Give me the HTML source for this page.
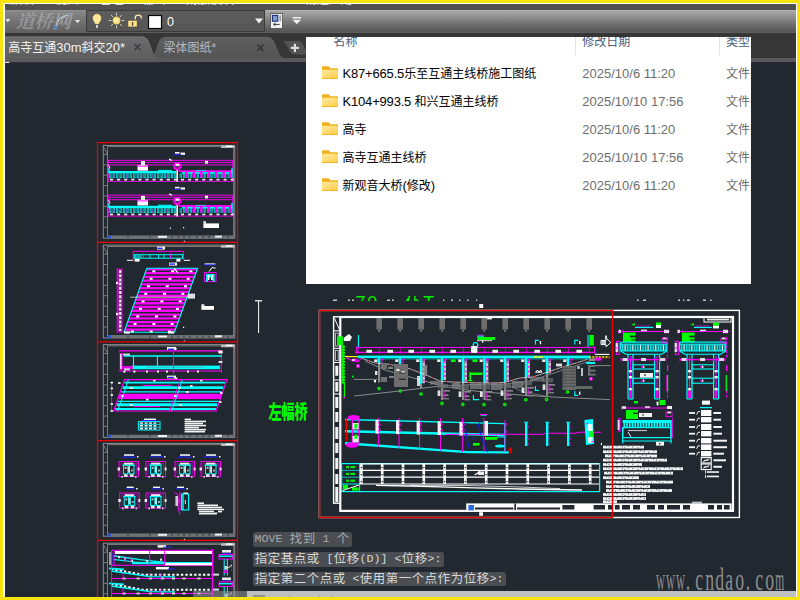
<!DOCTYPE html><html lang="zh"><head><meta charset="utf-8"><title>CAD</title><style>
html,body{margin:0;padding:0}
body{width:800px;height:600px;position:relative;overflow:hidden;background:#f8e40c;font-family:"Liberation Sans","Noto Sans CJK SC",sans-serif}
.abs{position:absolute}
#wl{left:3px;top:3px;width:794px;height:593.6px;background:#fff}
#app{left:5px;top:4px;width:790.8px;height:592.6px;background:#212830;overflow:hidden}
#menu{left:0;top:0;width:791px;height:6.2px;background:#515151;overflow:hidden}
#menu span{position:absolute;top:-10.7px;font-size:12px;line-height:14px;color:#e8e8e8;white-space:nowrap}
#tb{left:0;top:6px;width:791px;height:22.7px;background:linear-gradient(#b6b6b6 0,#b2b2b2 4%,#a3a3a3 6%,#9a9a9a 20%,#7a7a7a 50%,#626262 78%,#555 94%,#5e5e5e 97%,#5e5e5e 100%)}
#tbl{left:0;top:6px;width:80.5px;height:22.7px;background:linear-gradient(#939393 0,#868686 8%,#727272 50%,#5f5f5f 100%)}
#combo{left:80.5px;top:6.4px;width:177px;height:19.6px;border:1px solid #3b3b3b;background:linear-gradient(#5d5d5d,#555)}
#tabbar{left:0;top:28.7px;width:791px;height:25.5px;background:#363636}
#tabstrip{left:0;top:54.2px;width:791px;height:4px;background:#5a5a5a}
.tabtxt{font-size:12px;line-height:14px;white-space:nowrap}
#win{left:300.7px;top:33px;width:445.5px;height:247.2px;background:#fff;overflow:hidden}
#win .h{position:absolute;top:-2.6px;font-size:12px;line-height:16px;color:#4c607a;white-space:nowrap}
#win .n{position:absolute;left:36.8px;font-size:12px;line-height:16px;color:#000;white-space:nowrap}
#win .d{position:absolute;left:276.6px;font-size:12px;line-height:16px;color:#6d6d6d;white-space:nowrap}
#win .t{position:absolute;left:420.4px;font-size:12px;line-height:16px;color:#6d6d6d;white-space:nowrap}
#win .l{font-size:13px;letter-spacing:-.18px}
#win .d .l{letter-spacing:0}
#win .sep{position:absolute;top:0;width:1px;height:18px;background:#e2e2e2}
.cmd{height:14.2px;border-radius:2.5px;background:#4a4e52;white-space:nowrap;font-family:"Liberation Mono","Noto Sans CJK SC",monospace;color:#e2e2e2;overflow:hidden}
.cmd i{font-style:normal;display:inline-block;width:7px;font-size:11.6px;line-height:14.2px;text-align:center;vertical-align:top}
.cmd b{font-weight:normal;display:inline-block;width:13px;font-size:12.4px;line-height:14.2px;text-align:center;vertical-align:top;font-family:"Liberation Sans","Noto Sans CJK SC",sans-serif}
.gt{height:4.6px;overflow:hidden;color:#00ee00;font-size:18px;line-height:18px;white-space:nowrap}
.gt span{position:relative;top:-2.4px;display:block;letter-spacing:1.6px}
.gt em{font-style:normal;margin-left:-1px}
#botbar{left:242px;top:586.5px;width:549px;height:6px;background:#bec0c2}
#botbar2{left:188px;top:586.5px;width:54px;height:6px;background:rgba(150,152,155,.55)}
#wm{left:648.2px;top:559px;white-space:nowrap;color:#8d8d8d;font-family:"Liberation Serif",serif}
#wm i{font-style:normal;display:inline-block;width:9.95px;text-align:center;font-size:31px;line-height:34px;transform:scaleX(.62);transform-origin:50% 50%}
#zfq{left:263.6px;top:399px;font-size:13px;line-height:13px;color:#00ff00;white-space:nowrap;font-weight:900;transform:scaleY(1.46);transform-origin:0 0;font-family:"Liberation Sans","Noto Sans CJK SC",sans-serif}
</style></head><body>
<div id="wl" class="abs"></div>
<div id="app" class="abs">
<svg class="abs" style="left:-5px;top:-4px" width="800" height="600" viewBox="0 0 800 600"><g fill="none" shape-rendering="auto"><rect x="103.3" y="145.4" width="131.5" height="92.8" fill="none" stroke="#8e8e8e" stroke-width="1"/><rect x="107.6" y="146.7" width="126.1" height="89.3" fill="none" stroke="#8e8e8e" stroke-width="0.8"/><path d="M103.3 146.7L107.6 154.4" stroke="#8e8e8e" stroke-width="0.8"/><path d="M103.3 154.4L107.6 154.4" stroke="#8e8e8e" stroke-width="0.8"/><path d="M103.3 164.8L107.6 164.8" stroke="#8e8e8e" stroke-width="0.8"/><path d="M103.3 175.2L107.6 175.2" stroke="#8e8e8e" stroke-width="0.8"/><path d="M103.3 185.6L107.6 185.6" stroke="#8e8e8e" stroke-width="0.8"/><path d="M103.3 196L107.6 196" stroke="#8e8e8e" stroke-width="0.8"/><path d="M103.3 206.4L107.6 206.4" stroke="#8e8e8e" stroke-width="0.8"/><path d="M103.3 216.8L107.6 216.8" stroke="#8e8e8e" stroke-width="0.8"/><path d="M103.3 227.2L107.6 227.2" stroke="#8e8e8e" stroke-width="0.8"/><rect x="107.6" y="236" width="126.1" height="2.2" fill="#6f7378"/><path d="M128 236L128 238.2" stroke="#212830" stroke-width="0.8"/><path d="M150 236L150 238.2" stroke="#212830" stroke-width="0.8"/><path d="M172 236L172 238.2" stroke="#212830" stroke-width="0.8"/><path d="M178 236L178 238.2" stroke="#212830" stroke-width="0.8"/><path d="M184 236L184 238.2" stroke="#212830" stroke-width="0.8"/><path d="M190 236L190 238.2" stroke="#212830" stroke-width="0.8"/><path d="M197 236L197 238.2" stroke="#212830" stroke-width="0.8"/><path d="M203 236L203 238.2" stroke="#212830" stroke-width="0.8"/><path d="M209 236L209 238.2" stroke="#212830" stroke-width="0.8"/><path d="M222 236L222 238.2" stroke="#212830" stroke-width="0.8"/><path d="M228 236L228 238.2" stroke="#212830" stroke-width="0.8"/><rect x="158" y="235.8" width="9" height="2" fill="#ffffff" opacity="0.9"/><rect x="215" y="235.6" width="7" height="2" fill="#ffffff" opacity="0.9"/><rect x="108.2" y="235.6" width="2.8" height="2.8" fill="#2a52d8"/><rect x="221" y="145.4" width="13.8" height="2.6" fill="#b9b9b9"/><rect x="226" y="145.6" width="6.5" height="1.4" fill="#ffffff"/><rect x="183.8" y="240.8" width="1.2" height="1.2" fill="#ffffff"/><rect x="175" y="152" width="4.6" height="1.6" fill="#ffffff"/><rect x="180.6" y="152.6" width="4.4" height="2.2" fill="#ffffff"/><path d="M174 154.7L181 154.7" stroke="#2222ff" stroke-width="1"/><rect x="108.2" y="160.3" width="124.6" height="21" fill="none" stroke="#ff00ff" stroke-width="0.9"/><path d="M108.2 162.4L232.8 162.4" stroke="#ff00ff" stroke-width="0.9"/><path d="M108.2 164.9L232.8 164.9" stroke="#ff00ff" stroke-width="0.9"/><rect x="205" y="160.9" width="3" height="2.8" fill="#ffffff"/><path d="M169 159.1L172 160.5" fill="none" stroke="#ffffff" stroke-width="1.2"/><rect x="141" y="161.1" width="4" height="4.2" fill="#ffffff"/><rect x="137.5" y="165.1" width="10.5" height="5.6" fill="#ffffff"/><path d="M137 166.1L148.4 166.1" stroke="#ff00ff" stroke-width="1"/><rect x="108.6" y="171" width="67.4" height="2.3" fill="#00ffff"/><rect x="158" y="169.9" width="14" height="1.2" fill="#00ffff" opacity="0.9"/><rect x="178.6" y="170.3" width="53.8" height="1.8" fill="#ff00ff"/><rect x="182" y="172.1" width="50.4" height="1.6" fill="#00ffff"/><rect x="196" y="170.1" width="10" height="0.8" fill="#00ffff"/><rect x="109.2" y="173.3" width="2.3" height="4.9" fill="#00ffff" opacity="0.82"/><rect x="109.95" y="173.9" width="0.8" height="3.2" fill="#212830" opacity="0.55"/><rect x="112.62" y="173.3" width="2.3" height="4.9" fill="#00ffff" opacity="0.82"/><rect x="113.37" y="173.9" width="0.8" height="3.2" fill="#212830" opacity="0.55"/><rect x="116.04" y="173.3" width="2.3" height="4.9" fill="#00ffff" opacity="0.82"/><rect x="116.79" y="173.9" width="0.8" height="3.2" fill="#212830" opacity="0.55"/><rect x="119.46" y="173.3" width="2.3" height="4.9" fill="#00ffff" opacity="0.82"/><rect x="120.21" y="173.9" width="0.8" height="3.2" fill="#212830" opacity="0.55"/><rect x="122.88" y="173.3" width="2.3" height="4.9" fill="#00ffff" opacity="0.82"/><rect x="123.63" y="173.9" width="0.8" height="3.2" fill="#212830" opacity="0.55"/><rect x="126.3" y="173.3" width="2.3" height="4.9" fill="#00ffff" opacity="0.82"/><rect x="127.05" y="173.9" width="0.8" height="3.2" fill="#212830" opacity="0.55"/><rect x="129.72" y="173.3" width="2.3" height="4.9" fill="#00ffff" opacity="0.82"/><rect x="130.47" y="173.9" width="0.8" height="3.2" fill="#212830" opacity="0.55"/><rect x="133.14" y="173.3" width="2.3" height="4.9" fill="#00ffff" opacity="0.82"/><rect x="133.89" y="173.9" width="0.8" height="3.2" fill="#212830" opacity="0.55"/><rect x="136.56" y="173.3" width="2.3" height="4.9" fill="#00ffff" opacity="0.82"/><rect x="137.31" y="173.9" width="0.8" height="3.2" fill="#212830" opacity="0.55"/><rect x="139.98" y="173.3" width="2.3" height="4.9" fill="#00ffff" opacity="0.82"/><rect x="140.73" y="173.9" width="0.8" height="3.2" fill="#212830" opacity="0.55"/><rect x="143.4" y="173.3" width="2.3" height="4.9" fill="#00ffff" opacity="0.82"/><rect x="144.15" y="173.9" width="0.8" height="3.2" fill="#212830" opacity="0.55"/><rect x="146.82" y="173.3" width="2.3" height="4.9" fill="#00ffff" opacity="0.82"/><rect x="147.57" y="173.9" width="0.8" height="3.2" fill="#212830" opacity="0.55"/><rect x="150.24" y="173.3" width="2.3" height="4.9" fill="#00ffff" opacity="0.82"/><rect x="150.99" y="173.9" width="0.8" height="3.2" fill="#212830" opacity="0.55"/><rect x="153.66" y="173.3" width="2.3" height="4.9" fill="#00ffff" opacity="0.82"/><rect x="154.41" y="173.9" width="0.8" height="3.2" fill="#212830" opacity="0.55"/><rect x="157.08" y="173.3" width="2.3" height="4.9" fill="#00ffff" opacity="0.82"/><rect x="157.83" y="173.9" width="0.8" height="3.2" fill="#212830" opacity="0.55"/><rect x="160.5" y="173.3" width="2.3" height="4.9" fill="#00ffff" opacity="0.82"/><rect x="161.25" y="173.9" width="0.8" height="3.2" fill="#212830" opacity="0.55"/><rect x="163.92" y="173.3" width="2.3" height="4.9" fill="#00ffff" opacity="0.82"/><rect x="164.67" y="173.9" width="0.8" height="3.2" fill="#212830" opacity="0.55"/><rect x="167.34" y="173.3" width="2.3" height="4.9" fill="#00ffff" opacity="0.82"/><rect x="168.09" y="173.9" width="0.8" height="3.2" fill="#212830" opacity="0.55"/><rect x="170.76" y="173.3" width="2.3" height="4.9" fill="#00ffff" opacity="0.82"/><rect x="171.51" y="173.9" width="0.8" height="3.2" fill="#212830" opacity="0.55"/><rect x="174.18" y="173.3" width="2.3" height="4.9" fill="#00ffff" opacity="0.82"/><rect x="174.93" y="173.9" width="0.8" height="3.2" fill="#212830" opacity="0.55"/><rect x="179.6" y="173.5" width="2.3" height="4.4" fill="#00ffff" opacity="0.8"/><rect x="180.35" y="174.3" width="0.8" height="3" fill="#212830" opacity="0.55"/><rect x="183.02" y="173.5" width="2.3" height="4.4" fill="#00ffff" opacity="0.8"/><rect x="183.77" y="174.3" width="0.8" height="3" fill="#212830" opacity="0.55"/><rect x="186.44" y="173.5" width="2.3" height="4.4" fill="#00ffff" opacity="0.8"/><rect x="187.19" y="174.3" width="0.8" height="3" fill="#212830" opacity="0.55"/><rect x="189.86" y="173.5" width="2.3" height="4.4" fill="#00ffff" opacity="0.8"/><rect x="190.61" y="174.3" width="0.8" height="3" fill="#212830" opacity="0.55"/><rect x="193.28" y="173.5" width="2.3" height="4.4" fill="#00ffff" opacity="0.8"/><rect x="194.03" y="174.3" width="0.8" height="3" fill="#212830" opacity="0.55"/><rect x="196.7" y="173.5" width="2.3" height="4.4" fill="#00ffff" opacity="0.8"/><rect x="197.45" y="174.3" width="0.8" height="3" fill="#212830" opacity="0.55"/><rect x="200.12" y="173.5" width="2.3" height="4.4" fill="#00ffff" opacity="0.8"/><rect x="200.87" y="174.3" width="0.8" height="3" fill="#212830" opacity="0.55"/><rect x="203.54" y="173.5" width="2.3" height="4.4" fill="#00ffff" opacity="0.8"/><rect x="204.29" y="174.3" width="0.8" height="3" fill="#212830" opacity="0.55"/><rect x="206.96" y="173.5" width="2.3" height="4.4" fill="#00ffff" opacity="0.8"/><rect x="207.71" y="174.3" width="0.8" height="3" fill="#212830" opacity="0.55"/><rect x="210.38" y="173.5" width="2.3" height="4.4" fill="#00ffff" opacity="0.8"/><rect x="211.13" y="174.3" width="0.8" height="3" fill="#212830" opacity="0.55"/><rect x="213.8" y="173.5" width="2.3" height="4.4" fill="#00ffff" opacity="0.8"/><rect x="214.55" y="174.3" width="0.8" height="3" fill="#212830" opacity="0.55"/><rect x="217.22" y="173.5" width="2.3" height="4.4" fill="#00ffff" opacity="0.8"/><rect x="217.97" y="174.3" width="0.8" height="3" fill="#212830" opacity="0.55"/><rect x="220.64" y="173.5" width="2.3" height="4.4" fill="#00ffff" opacity="0.8"/><rect x="221.39" y="174.3" width="0.8" height="3" fill="#212830" opacity="0.55"/><rect x="224.06" y="173.5" width="2.3" height="4.4" fill="#00ffff" opacity="0.8"/><rect x="224.81" y="174.3" width="0.8" height="3" fill="#212830" opacity="0.55"/><rect x="227.48" y="173.5" width="2.3" height="4.4" fill="#00ffff" opacity="0.8"/><rect x="228.23" y="174.3" width="0.8" height="3" fill="#212830" opacity="0.55"/><rect x="230.9" y="173.5" width="2.3" height="4.4" fill="#00ffff" opacity="0.8"/><rect x="231.65" y="174.3" width="0.8" height="3" fill="#212830" opacity="0.55"/><rect x="185" y="170.7" width="2.5" height="7" fill="#ff00ff"/><rect x="192.5" y="170.7" width="2.5" height="7" fill="#ff00ff"/><rect x="200" y="170.7" width="2.5" height="7" fill="#ff00ff"/><rect x="207.5" y="170.7" width="2.5" height="7" fill="#ff00ff"/><rect x="215" y="170.7" width="2.5" height="7" fill="#ff00ff"/><rect x="222.5" y="170.7" width="2.5" height="7" fill="#ff00ff"/><rect x="229" y="170.7" width="2.5" height="7" fill="#ff00ff"/><path d="M114 174.3L114 178.3" stroke="#ff00ff" stroke-width="0.8" stroke-opacity="0.8"/><path d="M127 174.3L127 178.3" stroke="#ff00ff" stroke-width="0.8" stroke-opacity="0.8"/><path d="M140 174.3L140 178.3" stroke="#ff00ff" stroke-width="0.8" stroke-opacity="0.8"/><path d="M166 174.3L166 178.3" stroke="#ff00ff" stroke-width="0.8" stroke-opacity="0.8"/><path d="M153 174.3L153 178.3" stroke="#ff00ff" stroke-width="0.8" stroke-opacity="0.8"/><rect x="110" y="178.8" width="3" height="1.7" fill="#ffffff" opacity="0.92"/><rect x="117.1" y="178.8" width="3" height="1.7" fill="#ffffff" opacity="0.92"/><rect x="124.2" y="178.8" width="3" height="1.7" fill="#ffffff" opacity="0.92"/><rect x="131.3" y="178.8" width="3" height="1.7" fill="#ffffff" opacity="0.92"/><rect x="138.4" y="178.8" width="3" height="1.7" fill="#ffffff" opacity="0.92"/><rect x="145.5" y="178.8" width="3" height="1.7" fill="#ffffff" opacity="0.92"/><rect x="152.6" y="178.8" width="3" height="1.7" fill="#ffffff" opacity="0.92"/><rect x="159.7" y="178.8" width="3" height="1.7" fill="#ffffff" opacity="0.92"/><rect x="166.8" y="178.8" width="3" height="1.7" fill="#ffffff" opacity="0.92"/><rect x="173.9" y="178.8" width="3" height="1.7" fill="#ffffff" opacity="0.92"/><rect x="181" y="178.8" width="3" height="1.7" fill="#ffffff" opacity="0.92"/><rect x="188.1" y="178.8" width="3" height="1.7" fill="#ffffff" opacity="0.92"/><rect x="195.2" y="178.8" width="3" height="1.7" fill="#ffffff" opacity="0.92"/><rect x="202.3" y="178.8" width="3" height="1.7" fill="#ffffff" opacity="0.92"/><rect x="209.4" y="178.8" width="3" height="1.7" fill="#ffffff" opacity="0.92"/><rect x="216.5" y="178.8" width="3" height="1.7" fill="#ffffff" opacity="0.92"/><rect x="223.6" y="178.8" width="3" height="1.7" fill="#ffffff" opacity="0.92"/><rect x="230.7" y="178.8" width="3" height="1.7" fill="#ffffff" opacity="0.92"/><circle cx="177.2" cy="166.3" r="3.3" fill="none" stroke="#ff00ff" stroke-width="1.5"/><rect x="175.4" y="163.7" width="4" height="2.4" fill="#ffffff" opacity="0.9"/><path d="M177.2 169.7L177.2 181.7" stroke="#ffffff" stroke-width="1.5"/><path d="M175.4 166.3L177.2 170.3L179 166.3" fill="none" stroke="#ff00ff" stroke-width="0.9"/><path d="M109 168.3L109 173.3" stroke="#00ffff" stroke-width="1.4"/><path d="M232 168.3L232 173.3" stroke="#00ffff" stroke-width="1.4"/><path d="M108.6 165.3L110 168.3" fill="none" stroke="#ffffff" stroke-width="1"/><rect x="175" y="186.8" width="4.6" height="1.6" fill="#ffffff"/><rect x="180.6" y="187.4" width="4.4" height="2.2" fill="#ffffff"/><path d="M174 189.5L181 189.5" stroke="#2222ff" stroke-width="1"/><rect x="108.2" y="195.1" width="124.6" height="21" fill="none" stroke="#ff00ff" stroke-width="0.9"/><path d="M108.2 197.2L232.8 197.2" stroke="#ff00ff" stroke-width="0.9"/><path d="M108.2 199.7L232.8 199.7" stroke="#ff00ff" stroke-width="0.9"/><rect x="205" y="195.7" width="3" height="2.8" fill="#ffffff"/><path d="M169 193.9L172 195.3" fill="none" stroke="#ffffff" stroke-width="1.2"/><rect x="141" y="195.9" width="4" height="4.2" fill="#ffffff"/><rect x="137.5" y="199.9" width="10.5" height="5.6" fill="#ffffff"/><path d="M137 200.9L148.4 200.9" stroke="#ff00ff" stroke-width="1"/><rect x="108.6" y="205.8" width="67.4" height="2.3" fill="#00ffff"/><rect x="158" y="204.7" width="14" height="1.2" fill="#00ffff" opacity="0.9"/><rect x="178.6" y="205.1" width="53.8" height="1.8" fill="#ff00ff"/><rect x="182" y="206.9" width="50.4" height="1.6" fill="#00ffff"/><rect x="196" y="204.9" width="10" height="0.8" fill="#00ffff"/><rect x="109.2" y="208.1" width="2.3" height="4.9" fill="#00ffff" opacity="0.82"/><rect x="109.95" y="208.7" width="0.8" height="3.2" fill="#212830" opacity="0.55"/><rect x="112.62" y="208.1" width="2.3" height="4.9" fill="#00ffff" opacity="0.82"/><rect x="113.37" y="208.7" width="0.8" height="3.2" fill="#212830" opacity="0.55"/><rect x="116.04" y="208.1" width="2.3" height="4.9" fill="#00ffff" opacity="0.82"/><rect x="116.79" y="208.7" width="0.8" height="3.2" fill="#212830" opacity="0.55"/><rect x="119.46" y="208.1" width="2.3" height="4.9" fill="#00ffff" opacity="0.82"/><rect x="120.21" y="208.7" width="0.8" height="3.2" fill="#212830" opacity="0.55"/><rect x="122.88" y="208.1" width="2.3" height="4.9" fill="#00ffff" opacity="0.82"/><rect x="123.63" y="208.7" width="0.8" height="3.2" fill="#212830" opacity="0.55"/><rect x="126.3" y="208.1" width="2.3" height="4.9" fill="#00ffff" opacity="0.82"/><rect x="127.05" y="208.7" width="0.8" height="3.2" fill="#212830" opacity="0.55"/><rect x="129.72" y="208.1" width="2.3" height="4.9" fill="#00ffff" opacity="0.82"/><rect x="130.47" y="208.7" width="0.8" height="3.2" fill="#212830" opacity="0.55"/><rect x="133.14" y="208.1" width="2.3" height="4.9" fill="#00ffff" opacity="0.82"/><rect x="133.89" y="208.7" width="0.8" height="3.2" fill="#212830" opacity="0.55"/><rect x="136.56" y="208.1" width="2.3" height="4.9" fill="#00ffff" opacity="0.82"/><rect x="137.31" y="208.7" width="0.8" height="3.2" fill="#212830" opacity="0.55"/><rect x="139.98" y="208.1" width="2.3" height="4.9" fill="#00ffff" opacity="0.82"/><rect x="140.73" y="208.7" width="0.8" height="3.2" fill="#212830" opacity="0.55"/><rect x="143.4" y="208.1" width="2.3" height="4.9" fill="#00ffff" opacity="0.82"/><rect x="144.15" y="208.7" width="0.8" height="3.2" fill="#212830" opacity="0.55"/><rect x="146.82" y="208.1" width="2.3" height="4.9" fill="#00ffff" opacity="0.82"/><rect x="147.57" y="208.7" width="0.8" height="3.2" fill="#212830" opacity="0.55"/><rect x="150.24" y="208.1" width="2.3" height="4.9" fill="#00ffff" opacity="0.82"/><rect x="150.99" y="208.7" width="0.8" height="3.2" fill="#212830" opacity="0.55"/><rect x="153.66" y="208.1" width="2.3" height="4.9" fill="#00ffff" opacity="0.82"/><rect x="154.41" y="208.7" width="0.8" height="3.2" fill="#212830" opacity="0.55"/><rect x="157.08" y="208.1" width="2.3" height="4.9" fill="#00ffff" opacity="0.82"/><rect x="157.83" y="208.7" width="0.8" height="3.2" fill="#212830" opacity="0.55"/><rect x="160.5" y="208.1" width="2.3" height="4.9" fill="#00ffff" opacity="0.82"/><rect x="161.25" y="208.7" width="0.8" height="3.2" fill="#212830" opacity="0.55"/><rect x="163.92" y="208.1" width="2.3" height="4.9" fill="#00ffff" opacity="0.82"/><rect x="164.67" y="208.7" width="0.8" height="3.2" fill="#212830" opacity="0.55"/><rect x="167.34" y="208.1" width="2.3" height="4.9" fill="#00ffff" opacity="0.82"/><rect x="168.09" y="208.7" width="0.8" height="3.2" fill="#212830" opacity="0.55"/><rect x="170.76" y="208.1" width="2.3" height="4.9" fill="#00ffff" opacity="0.82"/><rect x="171.51" y="208.7" width="0.8" height="3.2" fill="#212830" opacity="0.55"/><rect x="174.18" y="208.1" width="2.3" height="4.9" fill="#00ffff" opacity="0.82"/><rect x="174.93" y="208.7" width="0.8" height="3.2" fill="#212830" opacity="0.55"/><rect x="179.6" y="208.3" width="2.3" height="4.4" fill="#00ffff" opacity="0.8"/><rect x="180.35" y="209.1" width="0.8" height="3" fill="#212830" opacity="0.55"/><rect x="183.02" y="208.3" width="2.3" height="4.4" fill="#00ffff" opacity="0.8"/><rect x="183.77" y="209.1" width="0.8" height="3" fill="#212830" opacity="0.55"/><rect x="186.44" y="208.3" width="2.3" height="4.4" fill="#00ffff" opacity="0.8"/><rect x="187.19" y="209.1" width="0.8" height="3" fill="#212830" opacity="0.55"/><rect x="189.86" y="208.3" width="2.3" height="4.4" fill="#00ffff" opacity="0.8"/><rect x="190.61" y="209.1" width="0.8" height="3" fill="#212830" opacity="0.55"/><rect x="193.28" y="208.3" width="2.3" height="4.4" fill="#00ffff" opacity="0.8"/><rect x="194.03" y="209.1" width="0.8" height="3" fill="#212830" opacity="0.55"/><rect x="196.7" y="208.3" width="2.3" height="4.4" fill="#00ffff" opacity="0.8"/><rect x="197.45" y="209.1" width="0.8" height="3" fill="#212830" opacity="0.55"/><rect x="200.12" y="208.3" width="2.3" height="4.4" fill="#00ffff" opacity="0.8"/><rect x="200.87" y="209.1" width="0.8" height="3" fill="#212830" opacity="0.55"/><rect x="203.54" y="208.3" width="2.3" height="4.4" fill="#00ffff" opacity="0.8"/><rect x="204.29" y="209.1" width="0.8" height="3" fill="#212830" opacity="0.55"/><rect x="206.96" y="208.3" width="2.3" height="4.4" fill="#00ffff" opacity="0.8"/><rect x="207.71" y="209.1" width="0.8" height="3" fill="#212830" opacity="0.55"/><rect x="210.38" y="208.3" width="2.3" height="4.4" fill="#00ffff" opacity="0.8"/><rect x="211.13" y="209.1" width="0.8" height="3" fill="#212830" opacity="0.55"/><rect x="213.8" y="208.3" width="2.3" height="4.4" fill="#00ffff" opacity="0.8"/><rect x="214.55" y="209.1" width="0.8" height="3" fill="#212830" opacity="0.55"/><rect x="217.22" y="208.3" width="2.3" height="4.4" fill="#00ffff" opacity="0.8"/><rect x="217.97" y="209.1" width="0.8" height="3" fill="#212830" opacity="0.55"/><rect x="220.64" y="208.3" width="2.3" height="4.4" fill="#00ffff" opacity="0.8"/><rect x="221.39" y="209.1" width="0.8" height="3" fill="#212830" opacity="0.55"/><rect x="224.06" y="208.3" width="2.3" height="4.4" fill="#00ffff" opacity="0.8"/><rect x="224.81" y="209.1" width="0.8" height="3" fill="#212830" opacity="0.55"/><rect x="227.48" y="208.3" width="2.3" height="4.4" fill="#00ffff" opacity="0.8"/><rect x="228.23" y="209.1" width="0.8" height="3" fill="#212830" opacity="0.55"/><rect x="230.9" y="208.3" width="2.3" height="4.4" fill="#00ffff" opacity="0.8"/><rect x="231.65" y="209.1" width="0.8" height="3" fill="#212830" opacity="0.55"/><rect x="185" y="205.5" width="2.5" height="7" fill="#ff00ff"/><rect x="192.5" y="205.5" width="2.5" height="7" fill="#ff00ff"/><rect x="200" y="205.5" width="2.5" height="7" fill="#ff00ff"/><rect x="207.5" y="205.5" width="2.5" height="7" fill="#ff00ff"/><rect x="215" y="205.5" width="2.5" height="7" fill="#ff00ff"/><rect x="222.5" y="205.5" width="2.5" height="7" fill="#ff00ff"/><rect x="229" y="205.5" width="2.5" height="7" fill="#ff00ff"/><path d="M114 209.1L114 213.1" stroke="#ff00ff" stroke-width="0.8" stroke-opacity="0.8"/><path d="M127 209.1L127 213.1" stroke="#ff00ff" stroke-width="0.8" stroke-opacity="0.8"/><path d="M140 209.1L140 213.1" stroke="#ff00ff" stroke-width="0.8" stroke-opacity="0.8"/><path d="M166 209.1L166 213.1" stroke="#ff00ff" stroke-width="0.8" stroke-opacity="0.8"/><path d="M153 209.1L153 213.1" stroke="#ff00ff" stroke-width="0.8" stroke-opacity="0.8"/><rect x="110" y="213.6" width="3" height="1.7" fill="#ffffff" opacity="0.92"/><rect x="117.1" y="213.6" width="3" height="1.7" fill="#ffffff" opacity="0.92"/><rect x="124.2" y="213.6" width="3" height="1.7" fill="#ffffff" opacity="0.92"/><rect x="131.3" y="213.6" width="3" height="1.7" fill="#ffffff" opacity="0.92"/><rect x="138.4" y="213.6" width="3" height="1.7" fill="#ffffff" opacity="0.92"/><rect x="145.5" y="213.6" width="3" height="1.7" fill="#ffffff" opacity="0.92"/><rect x="152.6" y="213.6" width="3" height="1.7" fill="#ffffff" opacity="0.92"/><rect x="159.7" y="213.6" width="3" height="1.7" fill="#ffffff" opacity="0.92"/><rect x="166.8" y="213.6" width="3" height="1.7" fill="#ffffff" opacity="0.92"/><rect x="173.9" y="213.6" width="3" height="1.7" fill="#ffffff" opacity="0.92"/><rect x="181" y="213.6" width="3" height="1.7" fill="#ffffff" opacity="0.92"/><rect x="188.1" y="213.6" width="3" height="1.7" fill="#ffffff" opacity="0.92"/><rect x="195.2" y="213.6" width="3" height="1.7" fill="#ffffff" opacity="0.92"/><rect x="202.3" y="213.6" width="3" height="1.7" fill="#ffffff" opacity="0.92"/><rect x="209.4" y="213.6" width="3" height="1.7" fill="#ffffff" opacity="0.92"/><rect x="216.5" y="213.6" width="3" height="1.7" fill="#ffffff" opacity="0.92"/><rect x="223.6" y="213.6" width="3" height="1.7" fill="#ffffff" opacity="0.92"/><rect x="230.7" y="213.6" width="3" height="1.7" fill="#ffffff" opacity="0.92"/><circle cx="177.2" cy="201.1" r="3.3" fill="none" stroke="#ff00ff" stroke-width="1.5"/><rect x="175.4" y="198.5" width="4" height="2.4" fill="#ffffff" opacity="0.9"/><path d="M177.2 204.5L177.2 216.5" stroke="#ffffff" stroke-width="1.5"/><path d="M175.4 201.1L177.2 205.1L179 201.1" fill="none" stroke="#ff00ff" stroke-width="0.9"/><path d="M109 203.1L109 208.1" stroke="#00ffff" stroke-width="1.4"/><path d="M232 203.1L232 208.1" stroke="#00ffff" stroke-width="1.4"/><path d="M108.6 200.1L110 203.1" fill="none" stroke="#ffffff" stroke-width="1"/><rect x="203.4" y="223.4" width="15.6" height="4.6" fill="#ffffff"/><rect x="203.4" y="221.2" width="2.6" height="2.4" fill="#ffffff" opacity="0.9"/><rect x="169.8" y="227.6" width="1.2" height="1.2" fill="#ffffff"/><rect x="183" y="227" width="1.2" height="1.2" fill="#ffffff"/><rect x="103.3" y="245.1" width="131.5" height="92.8" fill="none" stroke="#8e8e8e" stroke-width="1"/><rect x="107.6" y="246.4" width="126.1" height="89.3" fill="none" stroke="#8e8e8e" stroke-width="0.8"/><path d="M103.3 246.4L107.6 254.1" stroke="#8e8e8e" stroke-width="0.8"/><path d="M103.3 254.1L107.6 254.1" stroke="#8e8e8e" stroke-width="0.8"/><path d="M103.3 264.5L107.6 264.5" stroke="#8e8e8e" stroke-width="0.8"/><path d="M103.3 274.9L107.6 274.9" stroke="#8e8e8e" stroke-width="0.8"/><path d="M103.3 285.3L107.6 285.3" stroke="#8e8e8e" stroke-width="0.8"/><path d="M103.3 295.7L107.6 295.7" stroke="#8e8e8e" stroke-width="0.8"/><path d="M103.3 306.1L107.6 306.1" stroke="#8e8e8e" stroke-width="0.8"/><path d="M103.3 316.5L107.6 316.5" stroke="#8e8e8e" stroke-width="0.8"/><path d="M103.3 326.9L107.6 326.9" stroke="#8e8e8e" stroke-width="0.8"/><rect x="107.6" y="335.7" width="126.1" height="2.2" fill="#6f7378"/><path d="M128 335.7L128 337.9" stroke="#212830" stroke-width="0.8"/><path d="M150 335.7L150 337.9" stroke="#212830" stroke-width="0.8"/><path d="M172 335.7L172 337.9" stroke="#212830" stroke-width="0.8"/><path d="M178 335.7L178 337.9" stroke="#212830" stroke-width="0.8"/><path d="M184 335.7L184 337.9" stroke="#212830" stroke-width="0.8"/><path d="M190 335.7L190 337.9" stroke="#212830" stroke-width="0.8"/><path d="M197 335.7L197 337.9" stroke="#212830" stroke-width="0.8"/><path d="M203 335.7L203 337.9" stroke="#212830" stroke-width="0.8"/><path d="M209 335.7L209 337.9" stroke="#212830" stroke-width="0.8"/><path d="M222 335.7L222 337.9" stroke="#212830" stroke-width="0.8"/><path d="M228 335.7L228 337.9" stroke="#212830" stroke-width="0.8"/><rect x="158" y="335.5" width="9" height="2" fill="#ffffff" opacity="0.9"/><rect x="215" y="335.3" width="7" height="2" fill="#ffffff" opacity="0.9"/><rect x="108.2" y="335.3" width="2.8" height="2.8" fill="#2a52d8"/><rect x="221" y="245.1" width="13.8" height="2.6" fill="#b9b9b9"/><rect x="226" y="245.3" width="6.5" height="1.4" fill="#ffffff"/><rect x="183.8" y="340.5" width="1.2" height="1.2" fill="#ffffff"/><rect x="157" y="246.6" width="8" height="3" fill="#ffffff"/><rect x="157.4" y="247.6" width="5.2" height="1.4" fill="#2222ff"/><path d="M133 251.3L183.8 251.3" stroke="#ff00ff" stroke-width="1"/><path d="M133.3 251.3L133.3 260.4" stroke="#ff00ff" stroke-width="1"/><path d="M183.6 251.3L183.6 260.4" stroke="#ff00ff" stroke-width="1"/><rect x="134.4" y="254.7" width="48.2" height="3.5" fill="none" stroke="#00ffff" stroke-width="1"/><rect x="135" y="255.2" width="7" height="2.6" fill="#00ffff" opacity="0.55"/><path d="M143.5 254.7L143.5 258.2" stroke="#00ffff" stroke-width="0.9"/><path d="M158.4 254.7L158.4 258.2" stroke="#00ffff" stroke-width="0.9"/><path d="M170.6 254.7L170.6 258.2" stroke="#00ffff" stroke-width="0.9"/><path d="M164 254.7L164 258.2" stroke="#00ffff" stroke-width="0.9"/><path d="M150 254.7L150 258.2" stroke="#00ffff" stroke-width="0.9"/><path d="M143.5 253L143.5 259" stroke="#ff00ff" stroke-width="0.8"/><path d="M170.6 253L170.6 259" stroke="#ff00ff" stroke-width="0.8"/><rect x="134.6" y="258.8" width="5" height="2.8" fill="#ffffff"/><rect x="176.4" y="258.8" width="4" height="2.8" fill="#ffffff"/><rect x="127" y="259.8" width="6" height="1.2" fill="#ffffff" opacity="0.85"/><rect x="184" y="259.8" width="6" height="1.2" fill="#ffffff" opacity="0.85"/><path d="M146.8 268.2L197.6 268.2L196.75 270.53L145.97 270.53Z" fill="#ff00ff"/><path d="M145.46 271.96L196.24 271.96L195.39 274.3L144.63 274.3Z" fill="#ff00ff"/><path d="M144.12 275.73L194.87 275.73L194.02 278.06L143.29 278.06Z" fill="#ff00ff"/><path d="M142.78 279.49L193.51 279.49L192.66 281.83L141.94 281.83Z" fill="#ff00ff"/><path d="M141.44 283.26L192.14 283.26L191.3 285.59L140.6 285.59Z" fill="#ff00ff"/><path d="M140.09 287.02L190.78 287.02L189.93 289.36L139.26 289.36Z" fill="#ff00ff"/><path d="M138.75 290.79L189.41 290.79L188.57 293.12L137.92 293.12Z" fill="#ff00ff"/><path d="M137.41 294.55L188.05 294.55L187.2 296.89L136.58 296.89Z" fill="#ff00ff"/><path d="M136.07 298.32L186.68 298.32L185.84 300.65L135.24 300.65Z" fill="#ff00ff"/><path d="M134.73 302.08L185.32 302.08L184.47 304.42L133.9 304.42Z" fill="#ff00ff"/><path d="M133.39 305.85L183.95 305.85L183.11 308.18L132.56 308.18Z" fill="#ff00ff"/><path d="M132.05 309.61L182.59 309.61L181.74 311.95L131.22 311.95Z" fill="#ff00ff"/><path d="M130.71 313.38L181.22 313.38L180.38 315.71L129.87 315.71Z" fill="#ff00ff"/><path d="M129.36 317.14L179.86 317.14L179.01 319.48L128.53 319.48Z" fill="#ff00ff"/><path d="M128.02 320.91L178.49 320.91L177.65 323.24L127.19 323.24Z" fill="#ff00ff"/><path d="M126.68 324.67L177.13 324.67L176.28 327L125.85 327Z" fill="#ff00ff"/><path d="M125.34 328.44L175.76 328.44L174.92 330.77L124.51 330.77Z" fill="#ff00ff"/><path d="M146.8 268.2L197.6 268.2L174.4 332.2L124 332.2Z" fill="none" stroke="#00ffff" stroke-width="1.1"/><rect x="152.33" y="270.31" width="3" height="1.9" fill="#ffffff"/><rect x="149.65" y="277.84" width="3" height="1.9" fill="#ffffff"/><rect x="146.97" y="285.37" width="3" height="1.9" fill="#ffffff"/><rect x="144.28" y="292.9" width="3" height="1.9" fill="#ffffff"/><rect x="141.6" y="300.43" width="3" height="1.9" fill="#ffffff"/><rect x="138.92" y="307.96" width="3" height="1.9" fill="#ffffff"/><rect x="136.24" y="315.49" width="3" height="1.9" fill="#ffffff"/><rect x="133.55" y="323.02" width="3" height="1.9" fill="#ffffff"/><rect x="130.87" y="330.55" width="3" height="1.9" fill="#ffffff"/><rect x="171.13" y="270.31" width="3" height="1.9" fill="#ffffff"/><rect x="168.44" y="277.84" width="3" height="1.9" fill="#ffffff"/><rect x="165.76" y="285.37" width="3" height="1.9" fill="#ffffff"/><rect x="163.08" y="292.9" width="3" height="1.9" fill="#ffffff"/><rect x="160.4" y="300.43" width="3" height="1.9" fill="#ffffff"/><rect x="157.72" y="307.96" width="3" height="1.9" fill="#ffffff"/><rect x="155.03" y="315.49" width="3" height="1.9" fill="#ffffff"/><rect x="152.35" y="323.02" width="3" height="1.9" fill="#ffffff"/><rect x="149.67" y="330.55" width="3" height="1.9" fill="#ffffff"/><rect x="189.42" y="270.31" width="3" height="1.9" fill="#ffffff"/><rect x="186.73" y="277.84" width="3" height="1.9" fill="#ffffff"/><rect x="184.05" y="285.37" width="3" height="1.9" fill="#ffffff"/><rect x="181.37" y="292.9" width="3" height="1.9" fill="#ffffff"/><rect x="178.69" y="300.43" width="3" height="1.9" fill="#ffffff"/><rect x="176" y="307.96" width="3" height="1.9" fill="#ffffff"/><rect x="173.32" y="315.49" width="3" height="1.9" fill="#ffffff"/><rect x="170.64" y="323.02" width="3" height="1.9" fill="#ffffff"/><rect x="167.96" y="330.55" width="3" height="1.9" fill="#ffffff"/><path d="M130 297.2L190 297.2" stroke="#ffffff" stroke-width="0.8" stroke-opacity="0.85"/><rect x="188" y="293.6" width="7" height="5" fill="#ffffff" opacity="0.85"/><rect x="169" y="262.6" width="8" height="3" fill="#ffffff"/><rect x="169.4" y="263.4" width="5.6" height="1.4" fill="#2222ff"/><rect x="124" y="331.4" width="6" height="2.2" fill="#ffffff"/><rect x="168" y="331.4" width="6" height="2.2" fill="#ffffff"/><path d="M174 268.5L178 273" fill="none" stroke="#ffffff" stroke-width="1.2"/><rect x="117.2" y="269" width="4.8" height="63" fill="none" stroke="#ff00ff" stroke-width="0.9"/><path d="M120.2 270L120.2 331" stroke="#ffffff" stroke-width="2.3" stroke-opacity="0.92" stroke-dasharray="3 1.2"/><rect x="116" y="281.8" width="2.6" height="2.4" fill="#ffffff"/><rect x="116" y="312.8" width="2.6" height="2.4" fill="#ffffff"/><path d="M118.2 269L118.2 332" stroke="#ff00ff" stroke-width="0.9"/><rect x="204.6" y="263.4" width="10.8" height="1.6" fill="#ffffff"/><path d="M204 264.8L216 264.8" stroke="#2222ff" stroke-width="1"/><rect x="204.4" y="272.6" width="11.6" height="9" fill="none" stroke="#ff00ff" stroke-width="1"/><rect x="206" y="274" width="8.6" height="3.6" fill="#00ffff"/><rect x="207.4" y="275" width="2" height="5" fill="#ffffff"/><rect x="211" y="275" width="2" height="5" fill="#ffffff"/><path d="M209 271.6L212 267.6L215.6 268.2" fill="none" stroke="#ffffff" stroke-width="1"/><rect x="206" y="277.6" width="2" height="4" fill="#00ffff"/><rect x="212.6" y="277.6" width="2" height="4" fill="#00ffff"/><rect x="201.4" y="306" width="12.6" height="3.8" fill="#ffffff"/><rect x="201.4" y="304.2" width="3" height="2.2" fill="#ffffff" opacity="0.9"/><rect x="183" y="326.8" width="1.2" height="1.2" fill="#ffffff"/><rect x="103.3" y="344.6" width="131.5" height="92.8" fill="none" stroke="#8e8e8e" stroke-width="1"/><rect x="107.6" y="345.9" width="126.1" height="89.3" fill="none" stroke="#8e8e8e" stroke-width="0.8"/><path d="M103.3 345.9L107.6 353.6" stroke="#8e8e8e" stroke-width="0.8"/><path d="M103.3 353.6L107.6 353.6" stroke="#8e8e8e" stroke-width="0.8"/><path d="M103.3 364L107.6 364" stroke="#8e8e8e" stroke-width="0.8"/><path d="M103.3 374.4L107.6 374.4" stroke="#8e8e8e" stroke-width="0.8"/><path d="M103.3 384.8L107.6 384.8" stroke="#8e8e8e" stroke-width="0.8"/><path d="M103.3 395.2L107.6 395.2" stroke="#8e8e8e" stroke-width="0.8"/><path d="M103.3 405.6L107.6 405.6" stroke="#8e8e8e" stroke-width="0.8"/><path d="M103.3 416L107.6 416" stroke="#8e8e8e" stroke-width="0.8"/><path d="M103.3 426.4L107.6 426.4" stroke="#8e8e8e" stroke-width="0.8"/><rect x="107.6" y="435.2" width="126.1" height="2.2" fill="#6f7378"/><path d="M128 435.2L128 437.4" stroke="#212830" stroke-width="0.8"/><path d="M150 435.2L150 437.4" stroke="#212830" stroke-width="0.8"/><path d="M172 435.2L172 437.4" stroke="#212830" stroke-width="0.8"/><path d="M178 435.2L178 437.4" stroke="#212830" stroke-width="0.8"/><path d="M184 435.2L184 437.4" stroke="#212830" stroke-width="0.8"/><path d="M190 435.2L190 437.4" stroke="#212830" stroke-width="0.8"/><path d="M197 435.2L197 437.4" stroke="#212830" stroke-width="0.8"/><path d="M203 435.2L203 437.4" stroke="#212830" stroke-width="0.8"/><path d="M209 435.2L209 437.4" stroke="#212830" stroke-width="0.8"/><path d="M222 435.2L222 437.4" stroke="#212830" stroke-width="0.8"/><path d="M228 435.2L228 437.4" stroke="#212830" stroke-width="0.8"/><rect x="158" y="435" width="9" height="2" fill="#ffffff" opacity="0.9"/><rect x="215" y="434.8" width="7" height="2" fill="#ffffff" opacity="0.9"/><rect x="108.2" y="434.8" width="2.8" height="2.8" fill="#2a52d8"/><rect x="221" y="344.6" width="13.8" height="2.6" fill="#b9b9b9"/><rect x="226" y="344.8" width="6.5" height="1.4" fill="#ffffff"/><rect x="183.8" y="440" width="1.2" height="1.2" fill="#ffffff"/><rect x="167" y="347" width="9" height="3" fill="#ffffff"/><rect x="168" y="348.6" width="6" height="1.4" fill="#2222ff"/><rect x="175.4" y="348" width="1.4" height="1.4" fill="#ffffff"/><path d="M118.8 350.9L222 350.9" stroke="#ff00ff" stroke-width="1.1"/><path d="M221.3 350L221.3 373" stroke="#ff00ff" stroke-width="0.9"/><path d="M123.7 356L222 356" stroke="#00ffff" stroke-width="1.5"/><rect x="131.6" y="365.6" width="88.4" height="3.6" fill="#00ffff"/><rect x="146" y="366.6" width="59" height="1.2" fill="#35c7cf"/><path d="M133.5 356L133.5 366" stroke="#00ffff" stroke-width="1.1"/><path d="M157.4 356L157.4 366" stroke="#00ffff" stroke-width="1.1"/><path d="M173.4 351.5L173.4 374" stroke="#ff00ff" stroke-width="1"/><path d="M118.8 371L221.3 371" stroke="#ff00ff" stroke-width="1.1"/><rect x="119.6" y="353" width="3" height="17" fill="#ff00ff" opacity="0.9"/><rect x="120" y="354" width="1.6" height="15" fill="#ffffff" opacity="0.8"/><rect x="123.4" y="370.6" width="2" height="2" fill="#ffffff"/><rect x="133.4" y="370.6" width="2" height="2" fill="#ffffff"/><rect x="146" y="370.6" width="2" height="2" fill="#ffffff"/><rect x="157" y="370.6" width="2" height="2" fill="#ffffff"/><rect x="166" y="370.6" width="2" height="2" fill="#ffffff"/><rect x="187" y="370.6" width="2" height="2" fill="#ffffff"/><rect x="197" y="370.6" width="2" height="2" fill="#ffffff"/><rect x="218.4" y="350.6" width="4.2" height="2.8" fill="#ffffff"/><rect x="123" y="353.6" width="7" height="1.8" fill="#ffffff" opacity="0.85"/><rect x="218.6" y="361" width="3.8" height="2" fill="#ffffff" opacity="0.85"/><rect x="122" y="366" width="11" height="3" fill="#ff00ff" opacity="0.85"/><rect x="124" y="368.4" width="6" height="2" fill="#ffffff" opacity="0.8"/><rect x="167" y="375.6" width="9" height="2.8" fill="#ffffff"/><rect x="167.6" y="376.8" width="6.4" height="1.2" fill="#2222ff"/><rect x="175.4" y="377.6" width="2" height="2" fill="#ffffff"/><path d="M124.5 379.6L227 379.6L216.2 411L113.7 411Z" fill="none" stroke="#ff00ff" stroke-width="1.1"/><path d="M124.43 382.7L224.93 382.7" fill="none" stroke="#00ffff" stroke-width="1.8"/><path d="M122.75 387.6L223.25 387.6" fill="none" stroke="#00ffff" stroke-width="2.8"/><path d="M121.3 391.8L221.8 391.8" fill="none" stroke="#00ffff" stroke-width="1.3"/><path d="M118.04 401.3L218.54 401.3" fill="none" stroke="#00ffff" stroke-width="1.2"/><path d="M116.87 404.7L217.37 404.7" fill="none" stroke="#00ffff" stroke-width="3"/><path d="M115.39 409L215.89 409" fill="none" stroke="#00ffff" stroke-width="1.8"/><path d="M119.65 393.7L222.15 393.7L220.33 399L117.83 399Z" fill="#ff00ff"/><path d="M142.51 385.4L172.51 385.4" fill="none" stroke="#ff00ff" stroke-width="1"/><path d="M133.21 406.6L160.21 406.6" fill="none" stroke="#ff00ff" stroke-width="1"/><path d="M180.84 378.6L169.36 412" fill="none" stroke="#ff00ff" stroke-width="1"/><path d="M128.5 379.6L117.7 411" fill="none" stroke="#00ffff" stroke-width="1"/><path d="M182.5 379.6L171.7 411" fill="none" stroke="#00ffff" stroke-width="0.9"/><path d="M111.6 382L111.6 412" stroke="#ff00ff" stroke-width="0.9"/><rect x="110.6" y="381.8" width="2.4" height="1.6" fill="#ffffff"/><rect x="110.6" y="387.6" width="2.4" height="1.6" fill="#ffffff"/><rect x="110.6" y="394.2" width="2.4" height="1.6" fill="#ffffff"/><rect x="110.6" y="403.2" width="2.4" height="1.6" fill="#ffffff"/><rect x="110.6" y="410.2" width="2.4" height="1.6" fill="#ffffff"/><rect x="118" y="382.1" width="2.6" height="1.8" fill="#ffffff" opacity="0.9"/><rect x="130" y="387.1" width="2.6" height="1.8" fill="#ffffff" opacity="0.9"/><rect x="121" y="395.1" width="2.6" height="1.8" fill="#ffffff" opacity="0.9"/><rect x="130" y="404.1" width="2.6" height="1.8" fill="#ffffff" opacity="0.9"/><rect x="178" y="387.1" width="2.6" height="1.8" fill="#ffffff" opacity="0.9"/><rect x="174" y="395.1" width="2.6" height="1.8" fill="#ffffff" opacity="0.9"/><rect x="179" y="404.1" width="2.6" height="1.8" fill="#ffffff" opacity="0.9"/><rect x="190" y="385.1" width="2.6" height="1.8" fill="#ffffff" opacity="0.9"/><rect x="186" y="391.1" width="2.6" height="1.8" fill="#ffffff" opacity="0.9"/><rect x="220" y="392.1" width="2.6" height="1.8" fill="#ffffff" opacity="0.9"/><rect x="219" y="401.1" width="2.6" height="1.8" fill="#ffffff" opacity="0.9"/><rect x="146" y="398.7" width="2.6" height="1.8" fill="#ffffff" opacity="0.9"/><rect x="200" y="379.7" width="2.6" height="1.8" fill="#ffffff" opacity="0.9"/><rect x="153" y="379.7" width="2.6" height="1.8" fill="#ffffff" opacity="0.9"/><rect x="144" y="418.6" width="12" height="1.4" fill="#ffffff"/><path d="M141 420.6L157 420.6" stroke="#2222ff" stroke-width="1"/><rect x="138.4" y="421.6" width="21.6" height="8.4" fill="none" stroke="#00ffff" stroke-width="1"/><path d="M138.4 424.4L160 424.4" stroke="#00ffff" stroke-width="0.8"/><path d="M138.4 427.2L160 427.2" stroke="#00ffff" stroke-width="0.8"/><rect x="140" y="422.4" width="3" height="1.4" fill="#ffffff" opacity="0.9"/><rect x="140" y="425" width="3" height="1.6" fill="#ffffff" opacity="0.9"/><rect x="140" y="427.8" width="3" height="1.6" fill="#ffffff" opacity="0.9"/><rect x="144.6" y="422.4" width="3" height="1.4" fill="#ffffff" opacity="0.9"/><rect x="144.6" y="425" width="3" height="1.6" fill="#ffffff" opacity="0.9"/><rect x="144.6" y="427.8" width="3" height="1.6" fill="#ffffff" opacity="0.9"/><rect x="149" y="422.4" width="3" height="1.4" fill="#ffffff" opacity="0.9"/><rect x="149" y="425" width="3" height="1.6" fill="#ffffff" opacity="0.9"/><rect x="149" y="427.8" width="3" height="1.6" fill="#ffffff" opacity="0.9"/><rect x="153.4" y="422.4" width="3" height="1.4" fill="#ffffff" opacity="0.9"/><rect x="153.4" y="425" width="3" height="1.6" fill="#ffffff" opacity="0.9"/><rect x="153.4" y="427.8" width="3" height="1.6" fill="#ffffff" opacity="0.9"/><rect x="184.6" y="418.6" width="6.4" height="1.6" fill="#ffffff" opacity="0.95"/><rect x="184.6" y="420.65" width="21.4" height="1.6" fill="#ffffff" opacity="0.95"/><rect x="184.6" y="422.7" width="18.4" height="1.6" fill="#ffffff" opacity="0.95"/><rect x="184.6" y="424.75" width="21.4" height="1.6" fill="#ffffff" opacity="0.95"/><rect x="184.6" y="426.8" width="14.4" height="1.6" fill="#ffffff" opacity="0.95"/><rect x="184.6" y="428.85" width="21.4" height="1.6" fill="#ffffff" opacity="0.95"/><rect x="184.6" y="430.9" width="20.4" height="1.6" fill="#ffffff" opacity="0.95"/><rect x="103.3" y="443.4" width="131.5" height="92.8" fill="none" stroke="#8e8e8e" stroke-width="1"/><rect x="107.6" y="444.7" width="126.1" height="89.3" fill="none" stroke="#8e8e8e" stroke-width="0.8"/><path d="M103.3 444.7L107.6 452.4" stroke="#8e8e8e" stroke-width="0.8"/><path d="M103.3 452.4L107.6 452.4" stroke="#8e8e8e" stroke-width="0.8"/><path d="M103.3 462.8L107.6 462.8" stroke="#8e8e8e" stroke-width="0.8"/><path d="M103.3 473.2L107.6 473.2" stroke="#8e8e8e" stroke-width="0.8"/><path d="M103.3 483.6L107.6 483.6" stroke="#8e8e8e" stroke-width="0.8"/><path d="M103.3 494L107.6 494" stroke="#8e8e8e" stroke-width="0.8"/><path d="M103.3 504.4L107.6 504.4" stroke="#8e8e8e" stroke-width="0.8"/><path d="M103.3 514.8L107.6 514.8" stroke="#8e8e8e" stroke-width="0.8"/><path d="M103.3 525.2L107.6 525.2" stroke="#8e8e8e" stroke-width="0.8"/><rect x="107.6" y="534" width="126.1" height="2.2" fill="#6f7378"/><path d="M128 534L128 536.2" stroke="#212830" stroke-width="0.8"/><path d="M150 534L150 536.2" stroke="#212830" stroke-width="0.8"/><path d="M172 534L172 536.2" stroke="#212830" stroke-width="0.8"/><path d="M178 534L178 536.2" stroke="#212830" stroke-width="0.8"/><path d="M184 534L184 536.2" stroke="#212830" stroke-width="0.8"/><path d="M190 534L190 536.2" stroke="#212830" stroke-width="0.8"/><path d="M197 534L197 536.2" stroke="#212830" stroke-width="0.8"/><path d="M203 534L203 536.2" stroke="#212830" stroke-width="0.8"/><path d="M209 534L209 536.2" stroke="#212830" stroke-width="0.8"/><path d="M222 534L222 536.2" stroke="#212830" stroke-width="0.8"/><path d="M228 534L228 536.2" stroke="#212830" stroke-width="0.8"/><rect x="158" y="533.8" width="9" height="2" fill="#ffffff" opacity="0.9"/><rect x="215" y="533.6" width="7" height="2" fill="#ffffff" opacity="0.9"/><rect x="108.2" y="533.6" width="2.8" height="2.8" fill="#2a52d8"/><rect x="221" y="443.4" width="13.8" height="2.6" fill="#b9b9b9"/><rect x="226" y="443.6" width="6.5" height="1.4" fill="#ffffff"/><rect x="183.8" y="538.8" width="1.2" height="1.2" fill="#ffffff"/><rect x="119" y="461.5" width="19.5" height="15" fill="none" stroke="#ff00ff" stroke-width="0.9"/><path d="M121 463.5L136.5 463.5" stroke="#ff00ff" stroke-width="0.7" stroke-opacity="0.7"/><path d="M121 463.5L121 474.5" stroke="#ff00ff" stroke-width="0.7" stroke-opacity="0.6"/><path d="M136.5 463.5L136.5 474.5" stroke="#ff00ff" stroke-width="0.7" stroke-opacity="0.6"/><rect x="123.5" y="465.1" width="4.5" height="8.8" fill="none" stroke="#00ffff" stroke-width="1"/><rect x="129.5" y="465.1" width="4.5" height="8.8" fill="none" stroke="#00ffff" stroke-width="1"/><path d="M122.4 465.1L135 465.1" stroke="#00ffff" stroke-width="1"/><rect x="124" y="462.7" width="9.4" height="1.8" fill="#ffffff" opacity="0.9"/><rect x="124" y="474.3" width="3.6" height="2.6" fill="#ffffff" opacity="0.9"/><rect x="130" y="474.3" width="3.6" height="2.6" fill="#ffffff" opacity="0.9"/><rect x="117.6" y="467.5" width="2.4" height="3" fill="#ffffff" opacity="0.92"/><rect x="137.6" y="467.5" width="2" height="3" fill="#ffffff" opacity="0.85"/><rect x="127.8" y="466.5" width="1.9" height="6" fill="#ffffff" opacity="0.75"/><rect x="124.6" y="466.9" width="2" height="2" fill="#ffffff" opacity="0.7"/><rect x="131" y="469.5" width="2" height="2" fill="#ffffff" opacity="0.6"/><rect x="121.4" y="475.9" width="1.6" height="2" fill="#ffffff" opacity="0.7"/><rect x="134.9" y="475.9" width="1.6" height="2" fill="#ffffff" opacity="0.7"/><rect x="124" y="454.3" width="10" height="1.5" fill="#ffffff"/><path d="M122 457L136 457" stroke="#2222ff" stroke-width="1.1"/><rect x="137" y="456" width="1.5" height="1.5" fill="#ffffff"/><rect x="146" y="461.5" width="19.5" height="15" fill="none" stroke="#ff00ff" stroke-width="0.9"/><path d="M148 463.5L163.5 463.5" stroke="#ff00ff" stroke-width="0.7" stroke-opacity="0.7"/><path d="M148 463.5L148 474.5" stroke="#ff00ff" stroke-width="0.7" stroke-opacity="0.6"/><path d="M163.5 463.5L163.5 474.5" stroke="#ff00ff" stroke-width="0.7" stroke-opacity="0.6"/><rect x="150.5" y="465.1" width="4.5" height="8.8" fill="none" stroke="#00ffff" stroke-width="1"/><rect x="156.5" y="465.1" width="4.5" height="8.8" fill="none" stroke="#00ffff" stroke-width="1"/><path d="M149.4 465.1L162 465.1" stroke="#00ffff" stroke-width="1"/><rect x="151" y="462.7" width="9.4" height="1.8" fill="#ffffff" opacity="0.9"/><rect x="151" y="474.3" width="3.6" height="2.6" fill="#ffffff" opacity="0.9"/><rect x="157" y="474.3" width="3.6" height="2.6" fill="#ffffff" opacity="0.9"/><rect x="144.6" y="467.5" width="2.4" height="3" fill="#ffffff" opacity="0.92"/><rect x="164.6" y="467.5" width="2" height="3" fill="#ffffff" opacity="0.85"/><rect x="154.8" y="466.5" width="1.9" height="6" fill="#ffffff" opacity="0.75"/><rect x="151.6" y="466.9" width="2" height="2" fill="#ffffff" opacity="0.7"/><rect x="158" y="469.5" width="2" height="2" fill="#ffffff" opacity="0.6"/><rect x="148.4" y="475.9" width="1.6" height="2" fill="#ffffff" opacity="0.7"/><rect x="161.9" y="475.9" width="1.6" height="2" fill="#ffffff" opacity="0.7"/><rect x="151" y="454.3" width="10" height="1.5" fill="#ffffff"/><path d="M149 457L163 457" stroke="#2222ff" stroke-width="1.1"/><rect x="164" y="456" width="1.5" height="1.5" fill="#ffffff"/><rect x="175" y="461.5" width="19.5" height="15" fill="none" stroke="#ff00ff" stroke-width="0.9"/><path d="M177 463.5L192.5 463.5" stroke="#ff00ff" stroke-width="0.7" stroke-opacity="0.7"/><path d="M177 463.5L177 474.5" stroke="#ff00ff" stroke-width="0.7" stroke-opacity="0.6"/><path d="M192.5 463.5L192.5 474.5" stroke="#ff00ff" stroke-width="0.7" stroke-opacity="0.6"/><rect x="179.5" y="465.1" width="4.5" height="8.8" fill="none" stroke="#00ffff" stroke-width="1"/><rect x="185.5" y="465.1" width="4.5" height="8.8" fill="none" stroke="#00ffff" stroke-width="1"/><path d="M178.4 465.1L191 465.1" stroke="#00ffff" stroke-width="1"/><rect x="180" y="462.7" width="9.4" height="1.8" fill="#ffffff" opacity="0.9"/><rect x="180" y="474.3" width="3.6" height="2.6" fill="#ffffff" opacity="0.9"/><rect x="186" y="474.3" width="3.6" height="2.6" fill="#ffffff" opacity="0.9"/><rect x="173.6" y="467.5" width="2.4" height="3" fill="#ffffff" opacity="0.92"/><rect x="193.6" y="467.5" width="2" height="3" fill="#ffffff" opacity="0.85"/><rect x="183.8" y="466.5" width="1.9" height="6" fill="#ffffff" opacity="0.75"/><rect x="180.6" y="466.9" width="2" height="2" fill="#ffffff" opacity="0.7"/><rect x="187" y="469.5" width="2" height="2" fill="#ffffff" opacity="0.6"/><rect x="177.4" y="475.9" width="1.6" height="2" fill="#ffffff" opacity="0.7"/><rect x="190.9" y="475.9" width="1.6" height="2" fill="#ffffff" opacity="0.7"/><rect x="180" y="454.3" width="10" height="1.5" fill="#ffffff"/><path d="M178 457L192 457" stroke="#2222ff" stroke-width="1.1"/><rect x="193" y="456" width="1.5" height="1.5" fill="#ffffff"/><rect x="201" y="461.5" width="19.5" height="15" fill="none" stroke="#ff00ff" stroke-width="0.9"/><path d="M203 463.5L218.5 463.5" stroke="#ff00ff" stroke-width="0.7" stroke-opacity="0.7"/><path d="M203 463.5L203 474.5" stroke="#ff00ff" stroke-width="0.7" stroke-opacity="0.6"/><path d="M218.5 463.5L218.5 474.5" stroke="#ff00ff" stroke-width="0.7" stroke-opacity="0.6"/><rect x="205.5" y="465.1" width="4.5" height="8.8" fill="none" stroke="#00ffff" stroke-width="1"/><rect x="211.5" y="465.1" width="4.5" height="8.8" fill="none" stroke="#00ffff" stroke-width="1"/><path d="M204.4 465.1L217 465.1" stroke="#00ffff" stroke-width="1"/><rect x="206" y="462.7" width="9.4" height="1.8" fill="#ffffff" opacity="0.9"/><rect x="206" y="474.3" width="3.6" height="2.6" fill="#ffffff" opacity="0.9"/><rect x="212" y="474.3" width="3.6" height="2.6" fill="#ffffff" opacity="0.9"/><rect x="199.6" y="467.5" width="2.4" height="3" fill="#ffffff" opacity="0.92"/><rect x="219.6" y="467.5" width="2" height="3" fill="#ffffff" opacity="0.85"/><rect x="209.8" y="466.5" width="1.9" height="6" fill="#ffffff" opacity="0.75"/><rect x="206.6" y="466.9" width="2" height="2" fill="#ffffff" opacity="0.7"/><rect x="213" y="469.5" width="2" height="2" fill="#ffffff" opacity="0.6"/><rect x="203.4" y="475.9" width="1.6" height="2" fill="#ffffff" opacity="0.7"/><rect x="216.9" y="475.9" width="1.6" height="2" fill="#ffffff" opacity="0.7"/><rect x="206" y="454.3" width="10" height="1.5" fill="#ffffff"/><path d="M204 457L218 457" stroke="#2222ff" stroke-width="1.1"/><rect x="219" y="456" width="1.5" height="1.5" fill="#ffffff"/><rect x="119.7" y="493" width="19.5" height="15" fill="none" stroke="#ff00ff" stroke-width="0.9"/><path d="M121.7 495L137.2 495" stroke="#ff00ff" stroke-width="0.7" stroke-opacity="0.7"/><path d="M121.7 495L121.7 506" stroke="#ff00ff" stroke-width="0.7" stroke-opacity="0.6"/><path d="M137.2 495L137.2 506" stroke="#ff00ff" stroke-width="0.7" stroke-opacity="0.6"/><rect x="124.2" y="496.6" width="4.5" height="8.8" fill="none" stroke="#00ffff" stroke-width="1"/><rect x="130.2" y="496.6" width="4.5" height="8.8" fill="none" stroke="#00ffff" stroke-width="1"/><path d="M123.1 496.6L135.7 496.6" stroke="#00ffff" stroke-width="1"/><rect x="124.7" y="494.2" width="9.4" height="1.8" fill="#ffffff" opacity="0.9"/><rect x="124.7" y="505.8" width="3.6" height="2.6" fill="#ffffff" opacity="0.9"/><rect x="130.7" y="505.8" width="3.6" height="2.6" fill="#ffffff" opacity="0.9"/><rect x="118.3" y="499" width="2.4" height="3" fill="#ffffff" opacity="0.92"/><rect x="138.3" y="499" width="2" height="3" fill="#ffffff" opacity="0.85"/><rect x="128.5" y="498" width="1.9" height="6" fill="#ffffff" opacity="0.75"/><rect x="125.3" y="498.4" width="2" height="2" fill="#ffffff" opacity="0.7"/><rect x="131.7" y="501" width="2" height="2" fill="#ffffff" opacity="0.6"/><rect x="122.1" y="507.4" width="1.6" height="2" fill="#ffffff" opacity="0.7"/><rect x="135.6" y="507.4" width="1.6" height="2" fill="#ffffff" opacity="0.7"/><rect x="126.7" y="486.6" width="7" height="1.4" fill="#ffffff"/><path d="M125.7 488.8L134.7 488.8" stroke="#2222ff" stroke-width="1"/><rect x="136.1" y="488" width="1.5" height="1.5" fill="#ffffff"/><rect x="146" y="493" width="19.5" height="15" fill="none" stroke="#ff00ff" stroke-width="0.9"/><path d="M148 495L163.5 495" stroke="#ff00ff" stroke-width="0.7" stroke-opacity="0.7"/><path d="M148 495L148 506" stroke="#ff00ff" stroke-width="0.7" stroke-opacity="0.6"/><path d="M163.5 495L163.5 506" stroke="#ff00ff" stroke-width="0.7" stroke-opacity="0.6"/><rect x="150.5" y="496.6" width="4.5" height="8.8" fill="none" stroke="#00ffff" stroke-width="1"/><rect x="156.5" y="496.6" width="4.5" height="8.8" fill="none" stroke="#00ffff" stroke-width="1"/><path d="M149.4 496.6L162 496.6" stroke="#00ffff" stroke-width="1"/><rect x="151" y="494.2" width="9.4" height="1.8" fill="#ffffff" opacity="0.9"/><rect x="151" y="505.8" width="3.6" height="2.6" fill="#ffffff" opacity="0.9"/><rect x="157" y="505.8" width="3.6" height="2.6" fill="#ffffff" opacity="0.9"/><rect x="144.6" y="499" width="2.4" height="3" fill="#ffffff" opacity="0.92"/><rect x="164.6" y="499" width="2" height="3" fill="#ffffff" opacity="0.85"/><rect x="154.8" y="498" width="1.9" height="6" fill="#ffffff" opacity="0.75"/><rect x="151.6" y="498.4" width="2" height="2" fill="#ffffff" opacity="0.7"/><rect x="158" y="501" width="2" height="2" fill="#ffffff" opacity="0.6"/><rect x="148.4" y="507.4" width="1.6" height="2" fill="#ffffff" opacity="0.7"/><rect x="161.9" y="507.4" width="1.6" height="2" fill="#ffffff" opacity="0.7"/><rect x="153" y="486.6" width="7" height="1.4" fill="#ffffff"/><path d="M152 488.8L161 488.8" stroke="#2222ff" stroke-width="1"/><rect x="162.4" y="488" width="1.5" height="1.5" fill="#ffffff"/><rect x="177" y="486.6" width="7" height="1.4" fill="#ffffff"/><path d="M176 488.8L185 488.8" stroke="#2222ff" stroke-width="1"/><rect x="186.4" y="488" width="1.5" height="1.5" fill="#ffffff"/><rect x="181.6" y="494" width="7" height="16" fill="none" stroke="#00ffff" stroke-width="1.1"/><rect x="181.6" y="494" width="2.4" height="16" fill="#00ffff" opacity="0.7"/><path d="M174.4 492.6L178 494.4L178 507.6L180 514.6" fill="none" stroke="#ff00ff" stroke-width="1"/><path d="M180 492L180 510" stroke="#ff00ff" stroke-width="0.9"/><rect x="175.4" y="496" width="2.6" height="10" fill="#ffffff" opacity="0.75"/><rect x="178.4" y="499" width="1.6" height="4" fill="#ff00ff" opacity="0.8"/><rect x="183.4" y="492.4" width="4.6" height="1.6" fill="#ffffff" opacity="0.8"/><rect x="184.8" y="500" width="1.2" height="4" fill="#ffffff" opacity="0.7"/><rect x="197.4" y="502.4" width="6.6" height="1.6" fill="#ffffff" opacity="0.95"/><rect x="197.4" y="504.5" width="20.6" height="1.6" fill="#ffffff" opacity="0.95"/><rect x="197.4" y="506.6" width="24.6" height="1.6" fill="#ffffff" opacity="0.95"/><rect x="197.4" y="508.7" width="26.6" height="1.6" fill="#ffffff" opacity="0.95"/><rect x="199" y="510.8" width="23" height="1.6" fill="#ffffff" opacity="0.95"/><rect x="199" y="512.9" width="18" height="1.6" fill="#ffffff" opacity="0.95"/><rect x="214" y="510" width="4" height="2" fill="#212830"/><rect x="103.3" y="543.2" width="131.5" height="92.8" fill="none" stroke="#8e8e8e" stroke-width="1"/><rect x="107.6" y="544.5" width="126.1" height="89.3" fill="none" stroke="#8e8e8e" stroke-width="0.8"/><path d="M103.3 544.5L107.6 552.2" stroke="#8e8e8e" stroke-width="0.8"/><path d="M103.3 552.2L107.6 552.2" stroke="#8e8e8e" stroke-width="0.8"/><path d="M103.3 562.6L107.6 562.6" stroke="#8e8e8e" stroke-width="0.8"/><path d="M103.3 573L107.6 573" stroke="#8e8e8e" stroke-width="0.8"/><path d="M103.3 583.4L107.6 583.4" stroke="#8e8e8e" stroke-width="0.8"/><path d="M103.3 593.8L107.6 593.8" stroke="#8e8e8e" stroke-width="0.8"/><path d="M103.3 604.2L107.6 604.2" stroke="#8e8e8e" stroke-width="0.8"/><path d="M103.3 614.6L107.6 614.6" stroke="#8e8e8e" stroke-width="0.8"/><path d="M103.3 625L107.6 625" stroke="#8e8e8e" stroke-width="0.8"/><rect x="107.6" y="633.8" width="126.1" height="2.2" fill="#6f7378"/><path d="M128 633.8L128 636" stroke="#212830" stroke-width="0.8"/><path d="M150 633.8L150 636" stroke="#212830" stroke-width="0.8"/><path d="M172 633.8L172 636" stroke="#212830" stroke-width="0.8"/><path d="M178 633.8L178 636" stroke="#212830" stroke-width="0.8"/><path d="M184 633.8L184 636" stroke="#212830" stroke-width="0.8"/><path d="M190 633.8L190 636" stroke="#212830" stroke-width="0.8"/><path d="M197 633.8L197 636" stroke="#212830" stroke-width="0.8"/><path d="M203 633.8L203 636" stroke="#212830" stroke-width="0.8"/><path d="M209 633.8L209 636" stroke="#212830" stroke-width="0.8"/><path d="M222 633.8L222 636" stroke="#212830" stroke-width="0.8"/><path d="M228 633.8L228 636" stroke="#212830" stroke-width="0.8"/><rect x="158" y="633.6" width="9" height="2" fill="#ffffff" opacity="0.9"/><rect x="215" y="633.4" width="7" height="2" fill="#ffffff" opacity="0.9"/><rect x="108.2" y="633.4" width="2.8" height="2.8" fill="#2a52d8"/><rect x="221" y="543.2" width="13.8" height="2.6" fill="#b9b9b9"/><rect x="226" y="543.4" width="6.5" height="1.4" fill="#ffffff"/><rect x="183.8" y="638.6" width="1.2" height="1.2" fill="#ffffff"/><rect x="157.6" y="545.2" width="8.4" height="2.4" fill="#ffffff"/><path d="M163 547.2L172 547.2" stroke="#2222ff" stroke-width="1"/><rect x="111.6" y="550.3" width="101" height="15" fill="none" stroke="#ff00ff" stroke-width="1"/><rect x="115" y="551" width="97" height="3" fill="#ffffff"/><rect x="132" y="562" width="80" height="2.2" fill="#00ffff"/><rect x="165" y="563" width="47" height="2.3" fill="#ffffff"/><path d="M113 555.8L140 559.6L165 562.4" fill="none" stroke="#00ffff" stroke-width="1.4"/><path d="M113 559.4L135 562L150 563.4" fill="none" stroke="#00ffff" stroke-width="1.1"/><rect x="118" y="556" width="2" height="2.2" fill="#ffffff" opacity="0.85"/><rect x="124" y="557.6" width="2" height="2.2" fill="#ffffff" opacity="0.85"/><rect x="131" y="559.6" width="2" height="2.2" fill="#ffffff" opacity="0.85"/><rect x="146" y="560" width="2" height="2.2" fill="#ffffff" opacity="0.85"/><rect x="160" y="558.6" width="2" height="2.2" fill="#ffffff" opacity="0.85"/><path d="M114 550.3L114 565.3" stroke="#ff00ff" stroke-width="1"/><path d="M149.7 550.3L149.7 565.3" stroke="#ff00ff" stroke-width="1"/><path d="M164.7 550.3L164.7 565.3" stroke="#ff00ff" stroke-width="1"/><path d="M125 556L125 562" stroke="#ff00ff" stroke-width="0.8"/><path d="M131 557L131 563" stroke="#ff00ff" stroke-width="0.8"/><rect x="109" y="552" width="2.6" height="13" fill="#ffffff" opacity="0.55"/><path d="M113 553L113 564" stroke="#1020ff" stroke-width="1" stroke-opacity="0.9"/><rect x="156" y="567" width="13" height="2.4" fill="#ffffff"/><path d="M168 569L175 569" stroke="#2222ff" stroke-width="1"/><path d="M111 569L143 574.7L212 574.7" fill="none" stroke="#ffffff" stroke-width="2" stroke-dasharray="2.4 2"/><path d="M109 568.4L124 569.4" fill="none" stroke="#00ffff" stroke-width="1.6"/><path d="M111 571L150 576.6L175 576.8" fill="none" stroke="#00ffff" stroke-width="1.3"/><path d="M111.6 578.5L212.6 578.5" stroke="#ff00ff" stroke-width="1.1"/><rect x="122.5" y="577.6" width="3" height="1.8" fill="#ffffff" opacity="0.9"/><rect x="136.6" y="577.6" width="3" height="1.8" fill="#ffffff" opacity="0.9"/><rect x="148.8" y="577.6" width="3" height="1.8" fill="#ffffff" opacity="0.9"/><rect x="161" y="577.6" width="3" height="1.8" fill="#ffffff" opacity="0.9"/><rect x="172" y="577.6" width="3" height="1.8" fill="#ffffff" opacity="0.9"/><rect x="182.5" y="577.6" width="3" height="1.8" fill="#ffffff" opacity="0.9"/><rect x="197.5" y="577.6" width="3" height="1.8" fill="#ffffff" opacity="0.9"/><path d="M123 573L123 580" stroke="#ff00ff" stroke-width="0.8"/><path d="M149.7 573L149.7 580" stroke="#ff00ff" stroke-width="0.8"/><path d="M160 573L160 580" stroke="#ff00ff" stroke-width="0.8"/><rect x="212.6" y="573.6" width="6.4" height="2" fill="#ffffff" opacity="0.85"/><path d="M111 584L143 589.7L212 589.7" fill="none" stroke="#ffffff" stroke-width="2" stroke-dasharray="2.4 2"/><path d="M109 583.4L124 584.4" fill="none" stroke="#00ffff" stroke-width="1.6"/><path d="M111 586L150 591.6L175 591.8" fill="none" stroke="#00ffff" stroke-width="1.3"/><path d="M111.6 593.5L212.6 593.5" stroke="#ff00ff" stroke-width="1.1"/><rect x="122.5" y="592.6" width="3" height="1.8" fill="#ffffff" opacity="0.9"/><rect x="136.6" y="592.6" width="3" height="1.8" fill="#ffffff" opacity="0.9"/><rect x="148.8" y="592.6" width="3" height="1.8" fill="#ffffff" opacity="0.9"/><rect x="161" y="592.6" width="3" height="1.8" fill="#ffffff" opacity="0.9"/><rect x="172" y="592.6" width="3" height="1.8" fill="#ffffff" opacity="0.9"/><rect x="182.5" y="592.6" width="3" height="1.8" fill="#ffffff" opacity="0.9"/><rect x="197.5" y="592.6" width="3" height="1.8" fill="#ffffff" opacity="0.9"/><path d="M123 588L123 595" stroke="#ff00ff" stroke-width="0.8"/><path d="M149.7 588L149.7 595" stroke="#ff00ff" stroke-width="0.8"/><path d="M160 588L160 595" stroke="#ff00ff" stroke-width="0.8"/><rect x="212.6" y="588.6" width="6.4" height="2" fill="#ffffff" opacity="0.85"/><path d="M111.6 550L111.6 598" stroke="#ff00ff" stroke-width="1"/><path d="M212.6 549L212.6 598" stroke="#ff00ff" stroke-width="1.1"/><rect x="222" y="550" width="9" height="2.6" fill="#ffffff" opacity="0.9"/><path d="M221 553.4L232 553.4" stroke="#2222ff" stroke-width="0.8"/><rect x="219" y="554.4" width="13.4" height="4.6" fill="none" stroke="#ff00ff" stroke-width="1"/><path d="M219 556.2L232.4 556.2" stroke="#00ffff" stroke-width="1.4"/><path d="M224.2 559L224.2 575.6" stroke="#00ffff" stroke-width="1"/><path d="M227.4 559L227.4 575.6" stroke="#00ffff" stroke-width="1"/><rect x="224" y="570" width="4" height="3" fill="#ff00ff" opacity="0.8"/><rect x="224.6" y="566" width="2.8" height="3.6" fill="#ffffff" opacity="0.8"/><path d="M231.6 558L231.6 572" stroke="#ff00ff" stroke-width="0.8" stroke-dasharray="1.4 1.4"/><path d="M228 568L232 565" fill="none" stroke="#ffffff" stroke-width="0.9"/><rect x="222" y="577.5" width="9" height="2.6" fill="#ffffff" opacity="0.9"/><path d="M221 580.9L232 580.9" stroke="#2222ff" stroke-width="0.8"/><rect x="219" y="581.9" width="13.4" height="4.6" fill="none" stroke="#ff00ff" stroke-width="1"/><path d="M219 583.7L232.4 583.7" stroke="#00ffff" stroke-width="1.4"/><path d="M224.2 586.5L224.2 603.1" stroke="#00ffff" stroke-width="1"/><path d="M227.4 586.5L227.4 603.1" stroke="#00ffff" stroke-width="1"/><rect x="224" y="597.5" width="4" height="3" fill="#ff00ff" opacity="0.8"/><rect x="224.6" y="593.5" width="2.8" height="3.6" fill="#ffffff" opacity="0.8"/><path d="M231.6 585.5L231.6 599.5" stroke="#ff00ff" stroke-width="0.8" stroke-dasharray="1.4 1.4"/><path d="M228 595.5L232 592.5" fill="none" stroke="#ffffff" stroke-width="0.9"/><path d="M97.5 142.6L97.5 598" stroke="#f00000" stroke-width="1.2"/><path d="M237.5 142.6L237.5 598" stroke="#f00000" stroke-width="1.2"/><path d="M97 142.6L238 142.6" stroke="#f00000" stroke-width="1.3"/><path d="M97 242.3L238 242.3" stroke="#f00000" stroke-width="1.3"/><path d="M97 341.8L238 341.8" stroke="#f00000" stroke-width="1.3"/><path d="M97 440.6L238 440.6" stroke="#f00000" stroke-width="1.3"/><path d="M97 540.4L238 540.4" stroke="#f00000" stroke-width="1.3"/><path d="M258.6 300.6L258.6 333" stroke="#ffffff" stroke-width="1"/><path d="M255 300.8L262.2 300.8" stroke="#ffffff" stroke-width="1.2"/><rect x="333" y="299.6" width="4" height="1.2" fill="#ffffff" opacity="0.9"/><rect x="348" y="299.6" width="2" height="1.2" fill="#ffffff" opacity="0.9"/><rect x="352" y="299.6" width="2" height="1.2" fill="#ffffff" opacity="0.9"/><rect x="387" y="299.6" width="3" height="1.2" fill="#ffffff" opacity="0.9"/><rect x="392" y="299.6" width="2" height="1.2" fill="#ffffff" opacity="0.9"/><rect x="443" y="299.6" width="1.4" height="1.2" fill="#ffffff" opacity="0.9"/><rect x="451" y="299.6" width="2" height="1.2" fill="#ffffff" opacity="0.9"/><rect x="459" y="299.6" width="1.4" height="1.2" fill="#ffffff" opacity="0.9"/><rect x="467" y="299.6" width="1.6" height="1.2" fill="#ffffff" opacity="0.9"/><rect x="476" y="299.6" width="1.4" height="1.2" fill="#ffffff" opacity="0.9"/><rect x="637" y="299.6" width="1.6" height="1.2" fill="#ffffff" opacity="0.9"/><rect x="643" y="299.6" width="3" height="1.2" fill="#ffffff" opacity="0.9"/><rect x="678" y="299.6" width="2" height="1.2" fill="#ffffff" opacity="0.9"/><rect x="683" y="299.6" width="1.4" height="1.2" fill="#ffffff" opacity="0.9"/><rect x="687" y="299.6" width="3" height="1.2" fill="#ffffff" opacity="0.9"/><rect x="703" y="299.6" width="3" height="1.2" fill="#ffffff" opacity="0.9"/><rect x="710" y="299.6" width="1.6" height="1.2" fill="#ffffff" opacity="0.9"/><rect x="479.2" y="304" width="4" height="4" fill="#ffffff"/><rect x="319.4" y="310.4" width="420" height="207.1" fill="none" stroke="#ffffff" stroke-width="1.4"/><rect x="340.3" y="317" width="392.7" height="193.9" fill="none" stroke="#ffffff" stroke-width="2.2"/><path d="M333.6 316.4L333.6 503.4" stroke="#ffffff" stroke-width="1.4"/><path d="M333 316.8L340.3 316.8" stroke="#ffffff" stroke-width="1.4"/><path d="M333 503.2L340.3 503.2" stroke="#ffffff" stroke-width="1.4"/><path d="M334.4 318L339.6 330" stroke="#ffffff" stroke-width="1"/><path d="M333.6 330.8L340 330.8" stroke="#ffffff" stroke-width="1"/><path d="M333.6 348.3L340 348.3" stroke="#ffffff" stroke-width="1"/><path d="M333.6 362.5L340 362.5" stroke="#ffffff" stroke-width="1"/><path d="M333.6 380L340 380" stroke="#ffffff" stroke-width="1"/><path d="M333.6 394L340 394" stroke="#ffffff" stroke-width="1"/><rect x="335.6" y="333" width="2.6" height="13" fill="none" stroke="#ffffff" stroke-width="0.8" opacity="0.8"/><rect x="335.6" y="350.4" width="2.6" height="10" fill="none" stroke="#ffffff" stroke-width="0.8" opacity="0.8"/><rect x="335.3" y="365.8" width="3" height="10" fill="#ffffff" opacity="0.95"/><rect x="335.3" y="382" width="3" height="9.6" fill="#ffffff" opacity="0.95"/><rect x="335.3" y="397" width="3" height="11" fill="#ffffff" opacity="0.95"/><rect x="335.3" y="412" width="3" height="10" fill="#ffffff" opacity="0.95"/><rect x="335.3" y="427" width="3" height="12" fill="#ffffff" opacity="0.95"/><rect x="335.3" y="443" width="3" height="10" fill="#ffffff" opacity="0.95"/><rect x="335.3" y="458" width="3" height="11" fill="#ffffff" opacity="0.95"/><rect x="335.3" y="474" width="3" height="10" fill="#ffffff" opacity="0.95"/><rect x="335.3" y="487" width="3" height="15" fill="#ffffff" opacity="0.95"/><rect x="704" y="317" width="27" height="5" fill="none" stroke="#ffffff" stroke-width="1"/><rect x="707" y="318.6" width="22" height="1.8" fill="#ffffff" opacity="0.9"/><rect x="483" y="317.2" width="9" height="2.2" fill="#ffffff" opacity="0.9"/><rect x="376.4" y="318" width="5.6" height="11.6" fill="#6e6e6e"/><rect x="378.2" y="329.6" width="1.8" height="2.4" fill="#6e6e6e"/><rect x="397.4" y="318" width="5.6" height="11.6" fill="#6e6e6e"/><rect x="399.2" y="329.6" width="1.8" height="2.4" fill="#6e6e6e"/><rect x="418.4" y="318" width="5.6" height="11.6" fill="#6e6e6e"/><rect x="420.2" y="329.6" width="1.8" height="2.4" fill="#6e6e6e"/><rect x="439.4" y="318" width="5.6" height="11.6" fill="#6e6e6e"/><rect x="441.2" y="329.6" width="1.8" height="2.4" fill="#6e6e6e"/><rect x="460.4" y="318" width="5.6" height="11.6" fill="#6e6e6e"/><rect x="462.2" y="329.6" width="1.8" height="2.4" fill="#6e6e6e"/><rect x="481.4" y="318" width="5.6" height="11.6" fill="#6e6e6e"/><rect x="483.2" y="329.6" width="1.8" height="2.4" fill="#6e6e6e"/><rect x="502.4" y="318" width="5.6" height="11.6" fill="#6e6e6e"/><rect x="504.2" y="329.6" width="1.8" height="2.4" fill="#6e6e6e"/><rect x="523.4" y="318" width="5.6" height="11.6" fill="#6e6e6e"/><rect x="525.2" y="329.6" width="1.8" height="2.4" fill="#6e6e6e"/><rect x="544.4" y="318" width="5.6" height="11.6" fill="#6e6e6e"/><rect x="546.2" y="329.6" width="1.8" height="2.4" fill="#6e6e6e"/><rect x="565.4" y="318" width="5.6" height="11.6" fill="#6e6e6e"/><rect x="567.2" y="329.6" width="1.8" height="2.4" fill="#6e6e6e"/><rect x="586.4" y="318" width="5.6" height="11.6" fill="#6e6e6e"/><rect x="588.2" y="329.6" width="1.8" height="2.4" fill="#6e6e6e"/><rect x="337" y="336.4" width="6" height="8.6" fill="#00ff00" opacity="0.95"/><path d="M343.5 338L349 334L352 337L350 341L344 341" fill="#ffffff"/><rect x="341.6" y="345" width="2.8" height="38" fill="#00ff00" opacity="0.8"/><rect x="341.2" y="346" width="3.8" height="1.6" fill="#00ff00"/><rect x="341.2" y="349" width="3.8" height="1.6" fill="#00ff00"/><rect x="341.2" y="352" width="3.8" height="1.6" fill="#00ff00"/><rect x="341.2" y="355" width="3.8" height="1.6" fill="#00ff00"/><rect x="341.2" y="358" width="3.8" height="1.6" fill="#00ff00"/><rect x="341.2" y="361" width="3.8" height="1.6" fill="#00ff00"/><rect x="341.2" y="364" width="3.8" height="1.6" fill="#00ff00"/><rect x="341.2" y="367" width="3.8" height="1.6" fill="#00ff00"/><rect x="341.2" y="370" width="3.8" height="1.6" fill="#00ff00"/><rect x="341.2" y="373" width="3.8" height="1.6" fill="#00ff00"/><rect x="341.2" y="376" width="3.8" height="1.6" fill="#00ff00"/><rect x="341.2" y="379" width="3.8" height="1.6" fill="#00ff00"/><rect x="341.2" y="382" width="3.8" height="1.6" fill="#00ff00"/><path d="M344.4 383L344.4 398" stroke="#00ff00" stroke-width="1.2"/><rect x="343.4" y="396.8" width="1.6" height="1.6" fill="#ff00ff"/><path d="M358.4 335L358.4 347" stroke="#00ffff" stroke-width="1.1"/><path d="M356 347.5L594.8 347.5" stroke="#ff00ff" stroke-width="1.2"/><path d="M355 352.4L594.8 352.4" stroke="#ff00ff" stroke-width="1.2"/><rect x="366.4" y="349.8" width="5.6" height="3" fill="#ffffff" opacity="0.95"/><rect x="387.4" y="349.8" width="5.6" height="3" fill="#ffffff" opacity="0.95"/><rect x="408.4" y="349.8" width="5.6" height="3" fill="#ffffff" opacity="0.95"/><rect x="429.4" y="349.8" width="5.6" height="3" fill="#ffffff" opacity="0.95"/><rect x="450.4" y="349.8" width="5.6" height="3" fill="#ffffff" opacity="0.95"/><rect x="471.4" y="349.8" width="5.6" height="3" fill="#ffffff" opacity="0.95"/><rect x="492.4" y="349.8" width="5.6" height="3" fill="#ffffff" opacity="0.95"/><rect x="513.4" y="349.8" width="5.6" height="3" fill="#ffffff" opacity="0.95"/><rect x="534.4" y="349.8" width="5.6" height="3" fill="#ffffff" opacity="0.95"/><rect x="555.4" y="349.8" width="5.6" height="3" fill="#ffffff" opacity="0.95"/><rect x="576.4" y="349.8" width="5.6" height="3" fill="#ffffff" opacity="0.95"/><path d="M356.4 346.4L356.4 353.6" stroke="#ff00ff" stroke-width="1"/><path d="M594.6 346.4L594.6 353.6" stroke="#ff00ff" stroke-width="1"/><path d="M358.4 346.6L358.4 353.6" stroke="#ff00ff" stroke-width="0.8" stroke-opacity="0.75"/><path d="M379.4 346.6L379.4 353.6" stroke="#ff00ff" stroke-width="0.8" stroke-opacity="0.75"/><path d="M400.4 346.6L400.4 353.6" stroke="#ff00ff" stroke-width="0.8" stroke-opacity="0.75"/><path d="M421.4 346.6L421.4 353.6" stroke="#ff00ff" stroke-width="0.8" stroke-opacity="0.75"/><path d="M442.4 346.6L442.4 353.6" stroke="#ff00ff" stroke-width="0.8" stroke-opacity="0.75"/><path d="M463.4 346.6L463.4 353.6" stroke="#ff00ff" stroke-width="0.8" stroke-opacity="0.75"/><path d="M484.4 346.6L484.4 353.6" stroke="#ff00ff" stroke-width="0.8" stroke-opacity="0.75"/><path d="M505.4 346.6L505.4 353.6" stroke="#ff00ff" stroke-width="0.8" stroke-opacity="0.75"/><path d="M526.4 346.6L526.4 353.6" stroke="#ff00ff" stroke-width="0.8" stroke-opacity="0.75"/><path d="M547.4 346.6L547.4 353.6" stroke="#ff00ff" stroke-width="0.8" stroke-opacity="0.75"/><path d="M568.4 346.6L568.4 353.6" stroke="#ff00ff" stroke-width="0.8" stroke-opacity="0.75"/><path d="M589.4 346.6L589.4 353.6" stroke="#ff00ff" stroke-width="0.8" stroke-opacity="0.75"/><path d="M345 356.6L357.5 356.6" stroke="#ffff00" stroke-width="1.2"/><rect x="357.5" y="355.6" width="232.5" height="2.5" fill="#00ffff"/><path d="M377.5 358.9L590 358.9" stroke="#00ffff" stroke-width="0.8" stroke-opacity="0.8"/><path d="M534 357L543 357" stroke="#ffff00" stroke-width="1.4"/><path d="M595 354.4L609.4 354.4" stroke="#ffffff" stroke-width="1.1"/><path d="M589 357L609.6 357" stroke="#ffff00" stroke-width="1.4" stroke-dasharray="2 1.3"/><path d="M592 358.2L611 358.2" stroke="#ee0000" stroke-width="0.9" stroke-dasharray="1.5 2.5"/><rect x="586" y="362" width="9" height="2" fill="#00ffff"/><rect x="589" y="358.2" width="6" height="2.8" fill="#8a8a8a"/><rect x="595" y="357.5" width="6" height="3.1" fill="#ff00ff"/><path d="M346 357.6L353 361L358 361.6L361 358.4" fill="none" stroke="#ff00ff" stroke-width="1.1"/><rect x="353" y="358.6" width="4.6" height="2.4" fill="#ff00ff" opacity="0.9"/><rect x="352" y="359" width="2.6" height="2" fill="#ffffff" opacity="0.8"/><circle cx="358" cy="366" r="1.9" fill="#ff00ff"/><circle cx="358" cy="366" r="0.8" fill="#ffffff"/><path d="M354 379.4L377.5 379.4" stroke="#8a8a8a" stroke-width="1"/><path d="M354 396L400 391L440 386" fill="none" stroke="#8a8a8a" stroke-width="1"/><path d="M440 386L470 384.6L505 384L530 381L560 371L590 361" fill="none" stroke="#8a8a8a" stroke-width="0.9" opacity="0.9"/><path d="M365 361L385 370L400 374.4L421 380L442 386L463 389.6L484 392L505 393.6L520 395L560 397.4L610 399.6" fill="none" stroke="#8a8a8a" stroke-width="1"/><path d="M505 384L525 392.6L545 396" fill="none" stroke="#8a8a8a" stroke-width="0.9" opacity="0.85"/><path d="M595 365.6L610.6 365.6" stroke="#8a8a8a" stroke-width="1"/><rect x="378" y="363" width="2.2" height="19.5" fill="#8a8a8a"/><rect x="377.8" y="358" width="2.5" height="5" fill="#00ffff"/><rect x="381" y="361.4" width="1.7" height="1.6" fill="#ff00ff"/><rect x="374.2" y="359.4" width="3.2" height="2.6" fill="#ffffff" opacity="0.92"/><rect x="380.6" y="358.8" width="3" height="1.6" fill="#ff00ff" opacity="0.9"/><rect x="399" y="365" width="2.2" height="22" fill="#8a8a8a"/><rect x="398.8" y="358" width="2.5" height="7" fill="#00ffff"/><rect x="402" y="361.4" width="1.7" height="1.6" fill="#ff00ff"/><rect x="395.2" y="359.4" width="3.2" height="2.6" fill="#ffffff" opacity="0.92"/><rect x="401.6" y="358.8" width="3" height="1.6" fill="#ff00ff" opacity="0.9"/><rect x="420" y="383.8" width="2.2" height="5" fill="#8a8a8a"/><rect x="419.8" y="358" width="2.5" height="25.8" fill="#00ffff"/><rect x="422.5" y="360.6" width="2.4" height="22.6" fill="#ffffff" opacity="0.78"/><rect x="423" y="361.4" width="1.7" height="1.6" fill="#ff00ff"/><rect x="423" y="366" width="1.7" height="1.6" fill="#ff00ff"/><rect x="423" y="370.6" width="1.7" height="1.6" fill="#ff00ff"/><rect x="423" y="375.2" width="1.7" height="1.6" fill="#ff00ff"/><rect x="423" y="379.8" width="1.7" height="1.6" fill="#ff00ff"/><rect x="416.2" y="359.4" width="3.2" height="2.6" fill="#ffffff" opacity="0.92"/><rect x="422.6" y="358.8" width="3" height="1.6" fill="#ff00ff" opacity="0.9"/><rect x="441" y="380.6" width="2.2" height="19.4" fill="#8a8a8a"/><rect x="440.8" y="358" width="2.5" height="22.6" fill="#00ffff"/><rect x="443.5" y="360.6" width="2.4" height="19.4" fill="#ffffff" opacity="0.78"/><rect x="444" y="361.4" width="1.7" height="1.6" fill="#ff00ff"/><rect x="444" y="366" width="1.7" height="1.6" fill="#ff00ff"/><rect x="444" y="370.6" width="1.7" height="1.6" fill="#ff00ff"/><rect x="444" y="375.2" width="1.7" height="1.6" fill="#ff00ff"/><rect x="437.2" y="359.4" width="3.2" height="2.6" fill="#ffffff" opacity="0.92"/><rect x="443.6" y="358.8" width="3" height="1.6" fill="#ff00ff" opacity="0.9"/><rect x="462" y="382.5" width="2.2" height="17.5" fill="#8a8a8a"/><rect x="461.8" y="358" width="2.5" height="24.5" fill="#00ffff"/><rect x="464.5" y="360.6" width="2.4" height="21.3" fill="#ffffff" opacity="0.78"/><rect x="465" y="361.4" width="1.7" height="1.6" fill="#ff00ff"/><rect x="465" y="366" width="1.7" height="1.6" fill="#ff00ff"/><rect x="465" y="370.6" width="1.7" height="1.6" fill="#ff00ff"/><rect x="465" y="375.2" width="1.7" height="1.6" fill="#ff00ff"/><rect x="465" y="379.8" width="1.7" height="1.6" fill="#ff00ff"/><rect x="458.2" y="359.4" width="3.2" height="2.6" fill="#ffffff" opacity="0.92"/><rect x="464.6" y="358.8" width="3" height="1.6" fill="#ff00ff" opacity="0.9"/><rect x="483.4" y="383" width="2.2" height="17" fill="#8a8a8a"/><rect x="483.2" y="358" width="2.5" height="25" fill="#00ffff"/><rect x="485.9" y="360.6" width="2.4" height="21.8" fill="#ffffff" opacity="0.78"/><rect x="486.4" y="361.4" width="1.7" height="1.6" fill="#ff00ff"/><rect x="486.4" y="366" width="1.7" height="1.6" fill="#ff00ff"/><rect x="486.4" y="370.6" width="1.7" height="1.6" fill="#ff00ff"/><rect x="486.4" y="375.2" width="1.7" height="1.6" fill="#ff00ff"/><rect x="486.4" y="379.8" width="1.7" height="1.6" fill="#ff00ff"/><rect x="479.6" y="359.4" width="3.2" height="2.6" fill="#ffffff" opacity="0.92"/><rect x="486" y="358.8" width="3" height="1.6" fill="#ff00ff" opacity="0.9"/><rect x="504" y="382" width="2.2" height="18" fill="#8a8a8a"/><rect x="503.8" y="358" width="2.5" height="24" fill="#00ffff"/><rect x="506.5" y="360.6" width="2.4" height="20.8" fill="#ffffff" opacity="0.78"/><rect x="507" y="361.4" width="1.7" height="1.6" fill="#ff00ff"/><rect x="507" y="366" width="1.7" height="1.6" fill="#ff00ff"/><rect x="507" y="370.6" width="1.7" height="1.6" fill="#ff00ff"/><rect x="507" y="375.2" width="1.7" height="1.6" fill="#ff00ff"/><rect x="507" y="379.8" width="1.7" height="1.6" fill="#ff00ff"/><rect x="500.2" y="359.4" width="3.2" height="2.6" fill="#ffffff" opacity="0.92"/><rect x="506.6" y="358.8" width="3" height="1.6" fill="#ff00ff" opacity="0.9"/><rect x="525" y="378" width="2.2" height="18" fill="#8a8a8a"/><rect x="524.8" y="358" width="2.5" height="20" fill="#00ffff"/><rect x="527.5" y="360.6" width="2.4" height="16.8" fill="#ffffff" opacity="0.78"/><rect x="528" y="361.4" width="1.7" height="1.6" fill="#ff00ff"/><rect x="528" y="366" width="1.7" height="1.6" fill="#ff00ff"/><rect x="528" y="370.6" width="1.7" height="1.6" fill="#ff00ff"/><rect x="528" y="375.2" width="1.7" height="1.6" fill="#ff00ff"/><rect x="521.2" y="359.4" width="3.2" height="2.6" fill="#ffffff" opacity="0.92"/><rect x="527.6" y="358.8" width="3" height="1.6" fill="#ff00ff" opacity="0.9"/><rect x="546" y="373.8" width="2.2" height="22.2" fill="#8a8a8a"/><rect x="545.8" y="358" width="2.5" height="15.8" fill="#00ffff"/><rect x="548.5" y="360.6" width="2.4" height="12.6" fill="#ffffff" opacity="0.78"/><rect x="549" y="361.4" width="1.7" height="1.6" fill="#ff00ff"/><rect x="549" y="366" width="1.7" height="1.6" fill="#ff00ff"/><rect x="549" y="370.6" width="1.7" height="1.6" fill="#ff00ff"/><rect x="542.2" y="359.4" width="3.2" height="2.6" fill="#ffffff" opacity="0.92"/><rect x="548.6" y="358.8" width="3" height="1.6" fill="#ff00ff" opacity="0.9"/><rect x="567" y="365.6" width="2.2" height="24.4" fill="#8a8a8a"/><rect x="566.8" y="358" width="2.5" height="7.6" fill="#00ffff"/><rect x="570" y="361.4" width="1.7" height="1.6" fill="#ff00ff"/><rect x="563.2" y="359.4" width="3.2" height="2.6" fill="#ffffff" opacity="0.92"/><rect x="569.6" y="358.8" width="3" height="1.6" fill="#ff00ff" opacity="0.9"/><path d="M361 358L375 363L390 364.4L410 368.8L427.5 375.6L440 381L452 382L470 382.6L490 383L505 382.4L520 378L532.5 377L545 373L561 367.5L576 363L587.5 359.4" fill="none" stroke="#ffffff" stroke-width="0.9" opacity="0.7"/><path d="M361 358L375 363L390 364.4L410 368.8L427.5 375.6L440 381L452 382L470 382.6L490 383L505 382.4L520 378L532.5 377L545 373L561 367.5L576 363L587.5 359.4" fill="none" stroke="#ee0000" stroke-width="0.9" opacity="0.9" stroke-dasharray="1.4 6"/><rect x="394" y="364" width="14" height="23" fill="#6e6e6e"/><rect x="381" y="363" width="6" height="6" fill="#6e6e6e"/><rect x="381" y="377" width="6" height="5" fill="#6e6e6e"/><rect x="388" y="366.6" width="5" height="2.4" fill="#8a8a8a" opacity="0.9"/><rect x="389" y="376" width="5" height="2" fill="#8a8a8a" opacity="0.9"/><rect x="396.4" y="369" width="3" height="2" fill="#ffffff" opacity="0.85"/><rect x="401.8" y="371" width="2.8" height="2" fill="#ffffff" opacity="0.8"/><rect x="374" y="380" width="2" height="2.4" fill="#ffffff"/><rect x="375" y="371" width="2.4" height="4" fill="#ffffff" opacity="0.85"/><rect x="399" y="378.6" width="7" height="1.4" fill="#2c3138"/><rect x="399" y="372.6" width="6" height="1" fill="#2c3138"/><rect x="423.6" y="365" width="3.6" height="11" fill="#8a8a8a" opacity="0.9"/><rect x="417" y="376" width="3" height="10" fill="#ffffff" opacity="0.8"/><rect x="437.6" y="384" width="10.4" height="4.4" fill="#6e6e6e" opacity="0.7"/><rect x="443.4" y="390" width="6.6" height="1.6" fill="#8a8a8a"/><rect x="443.4" y="394.4" width="5" height="1.6" fill="#8a8a8a"/><rect x="443.4" y="398" width="5.6" height="1.4" fill="#8a8a8a" opacity="0.9"/><rect x="437.6" y="390.4" width="2.8" height="5.6" fill="#ffffff" opacity="0.85"/><rect x="443.6" y="391" width="2" height="7" fill="#ff00ff" opacity="0.55"/><rect x="458.6" y="385" width="10.4" height="4.4" fill="#6e6e6e" opacity="0.7"/><rect x="464.4" y="391" width="6.6" height="1.6" fill="#8a8a8a"/><rect x="464.4" y="395.4" width="5" height="1.6" fill="#8a8a8a"/><rect x="464.4" y="399" width="5.6" height="1.4" fill="#8a8a8a" opacity="0.9"/><rect x="458.6" y="391.4" width="2.8" height="5.6" fill="#ffffff" opacity="0.85"/><rect x="464.6" y="392" width="2" height="7" fill="#ff00ff" opacity="0.55"/><rect x="480" y="385" width="10.4" height="4.4" fill="#6e6e6e" opacity="0.7"/><rect x="485.8" y="391" width="6.6" height="1.6" fill="#8a8a8a"/><rect x="485.8" y="395.4" width="5" height="1.6" fill="#8a8a8a"/><rect x="485.8" y="399" width="5.6" height="1.4" fill="#8a8a8a" opacity="0.9"/><rect x="480" y="391.4" width="2.8" height="5.6" fill="#ffffff" opacity="0.85"/><rect x="486" y="392" width="2" height="7" fill="#ff00ff" opacity="0.55"/><rect x="500.6" y="384" width="10.4" height="4.4" fill="#6e6e6e" opacity="0.7"/><rect x="506.4" y="390" width="6.6" height="1.6" fill="#8a8a8a"/><rect x="506.4" y="394.4" width="5" height="1.6" fill="#8a8a8a"/><rect x="506.4" y="398" width="5.6" height="1.4" fill="#8a8a8a" opacity="0.9"/><rect x="500.6" y="390.4" width="2.8" height="5.6" fill="#ffffff" opacity="0.85"/><rect x="506.6" y="391" width="2" height="7" fill="#ff00ff" opacity="0.55"/><rect x="521.6" y="381" width="10.4" height="4.4" fill="#6e6e6e" opacity="0.7"/><rect x="527.4" y="387" width="6.6" height="1.6" fill="#8a8a8a"/><rect x="527.4" y="391.4" width="5" height="1.6" fill="#8a8a8a"/><rect x="527.4" y="395" width="5.6" height="1.4" fill="#8a8a8a" opacity="0.9"/><rect x="521.6" y="387.4" width="2.8" height="5.6" fill="#ffffff" opacity="0.85"/><rect x="527.6" y="388" width="2" height="7" fill="#ff00ff" opacity="0.55"/><rect x="542.6" y="378" width="10.4" height="4.4" fill="#6e6e6e" opacity="0.7"/><rect x="548.4" y="384" width="6.6" height="1.6" fill="#8a8a8a"/><rect x="548.4" y="388.4" width="5" height="1.6" fill="#8a8a8a"/><rect x="548.4" y="392" width="5.6" height="1.4" fill="#8a8a8a" opacity="0.9"/><rect x="542.6" y="384.4" width="2.8" height="5.6" fill="#ffffff" opacity="0.85"/><rect x="548.6" y="385" width="2" height="7" fill="#ff00ff" opacity="0.55"/><rect x="430" y="381" width="11" height="3.4" fill="#8a8a8a" opacity="0.7"/><rect x="452" y="383" width="8" height="5" fill="#8a8a8a" opacity="0.7"/><rect x="470" y="383.4" width="11" height="5.6" fill="#8a8a8a" opacity="0.7"/><rect x="491" y="383.4" width="11" height="6.6" fill="#8a8a8a" opacity="0.7"/><rect x="512" y="381" width="11" height="7" fill="#8a8a8a" opacity="0.65"/><rect x="530" y="377" width="14" height="4.4" fill="#8a8a8a" opacity="0.6"/><rect x="562.5" y="366" width="13.5" height="24" fill="#6e6e6e" opacity="0.92"/><path d="M562.5 368.2L576 368.2" stroke="#3a3f46" stroke-width="0.7"/><path d="M562.5 371.2L576 371.2" stroke="#3a3f46" stroke-width="0.7"/><path d="M562.5 374.2L576 374.2" stroke="#3a3f46" stroke-width="0.7"/><path d="M562.5 377.2L576 377.2" stroke="#3a3f46" stroke-width="0.7"/><path d="M562.5 380.2L576 380.2" stroke="#3a3f46" stroke-width="0.7"/><path d="M562.5 383.2L576 383.2" stroke="#3a3f46" stroke-width="0.7"/><path d="M562.5 386.2L576 386.2" stroke="#3a3f46" stroke-width="0.7"/><rect x="576" y="386" width="16.5" height="3" fill="#6e6e6e" opacity="0.9"/><rect x="588" y="365" width="2.4" height="10.6" fill="#6e6e6e"/><rect x="588" y="365" width="7.6" height="2" fill="#6e6e6e"/><rect x="588" y="369.6" width="7.6" height="2" fill="#6e6e6e"/><rect x="588" y="373.6" width="7.6" height="2" fill="#6e6e6e"/><rect x="556" y="363.6" width="6" height="2.8" fill="#ffffff" opacity="0.85"/><path d="M535.6 372.4L537.4 370L539 372.4L540.6 370L542 372.4" fill="none" stroke="#ffffff" stroke-width="1"/><rect x="535.6" y="371.6" width="6.4" height="1.2" fill="#ffffff" opacity="0.8"/><rect x="581" y="368" width="2" height="8" fill="#ffffff" opacity="0.7"/><rect x="577" y="366" width="3" height="3" fill="#ffffff" opacity="0.6"/><rect x="477.4" y="337" width="17.6" height="3" fill="#00ff00"/><path d="M477 335.2L484 335.2" stroke="#ff00ff" stroke-width="0.8"/><path d="M477 336.2L484 336.2" stroke="#00ffff" stroke-width="1"/><path d="M477 340.7L492 340.7" stroke="#ffffff" stroke-width="0.9" stroke-opacity="0.9"/><rect x="482" y="340" width="1.2" height="3" fill="#ffffff" opacity="0.8"/><circle cx="475.5" cy="344.8" r="2.3" fill="none" stroke="#00ffff" stroke-width="1.2"/><rect x="471" y="346" width="6.4" height="6.4" fill="#ffffff" opacity="0.9"/><rect x="451" y="359.4" width="4.6" height="2.6" fill="#00ff00"/><rect x="472.5" y="359.4" width="5" height="2.6" fill="#00ff00"/><rect x="469.4" y="372.5" width="13.1" height="2.5" fill="#00ff00"/><rect x="469.4" y="372.5" width="1.6" height="8.5" fill="#00ff00"/><rect x="467.5" y="380" width="5" height="1.2" fill="#00ff00"/><rect x="589.4" y="335" width="4.4" height="10.6" fill="#00ff00"/><path d="M588 335L588 347" stroke="#00ffff" stroke-width="1.1"/><path d="M535.4 344.4L535.4 340.4L538.8 340.4" fill="none" stroke="#00ffff" stroke-width="1.1"/><rect x="539.8" y="341" width="1.3" height="3.2" fill="#ffffff"/><path d="M574.8 344.4L574.8 340.4L578.2 340.4" fill="none" stroke="#00ffff" stroke-width="1.1"/><rect x="579.2" y="341" width="1.3" height="3.2" fill="#ffffff"/><path d="M473.4 395L473.4 399.6L479 399.6" fill="none" stroke="#00ffff" stroke-width="1.1"/><path d="M535.4 386L535.4 390.4L538.8 390.4" fill="none" stroke="#00ffff" stroke-width="1.1"/><path d="M574.8 391L574.8 395.4L578 395.4" fill="none" stroke="#00ffff" stroke-width="1.1"/><rect x="579" y="391.6" width="1.4" height="3.2" fill="#ffffff"/><path d="M601 340.4L606 340.4L606 338L610.8 342.4L606 346.8L606 344.6L601 344.6Z" fill="none" stroke="#ffffff" stroke-width="1"/><rect x="601.6" y="341" width="4.4" height="3" fill="#ffffff" opacity="0.75"/><rect x="605" y="335.6" width="2" height="2.8" fill="#ffffff" opacity="0.85"/><circle cx="379" cy="388.5" r="1.8" fill="#00ff00"/><circle cx="379" cy="388.5" r="0.6" fill="#1a5a1a"/><circle cx="400.4" cy="391" r="1.8" fill="#00ff00"/><circle cx="400.4" cy="391" r="0.6" fill="#1a5a1a"/><circle cx="421" cy="394" r="1.8" fill="#00ff00"/><circle cx="421" cy="394" r="0.6" fill="#1a5a1a"/><circle cx="442" cy="403.4" r="1.8" fill="#00ff00"/><circle cx="442" cy="403.4" r="0.6" fill="#1a5a1a"/><circle cx="462.8" cy="404.4" r="1.8" fill="#00ff00"/><circle cx="462.8" cy="404.4" r="0.6" fill="#1a5a1a"/><circle cx="484" cy="404.6" r="1.8" fill="#00ff00"/><circle cx="484" cy="404.6" r="0.6" fill="#1a5a1a"/><circle cx="504.8" cy="404.6" r="1.8" fill="#00ff00"/><circle cx="504.8" cy="404.6" r="0.6" fill="#1a5a1a"/><circle cx="525.8" cy="399.8" r="1.8" fill="#00ff00"/><circle cx="525.8" cy="399.8" r="0.6" fill="#1a5a1a"/><circle cx="546.6" cy="399.4" r="1.8" fill="#00ff00"/><circle cx="546.6" cy="399.4" r="0.6" fill="#1a5a1a"/><circle cx="567.5" cy="392" r="1.8" fill="#00ff00"/><circle cx="567.5" cy="392" r="0.6" fill="#1a5a1a"/><circle cx="591" cy="378.8" r="1.9" fill="#ff00ff"/><circle cx="591" cy="378.8" r="0.7" fill="#ffffff"/><rect x="352" y="375.6" width="1.6" height="2" fill="#00ff00"/><path d="M345 419.5L504.6 423.7" fill="none" stroke="#00ffff" stroke-width="1.3"/><path d="M504.8 423L504.8 453" stroke="#00ffff" stroke-width="1.2"/><path d="M345 430.05L504.6 433.64L504.6 436.14L345 432.55Z" fill="#00ffff"/><path d="M345 442L467.5 451L508.8 451.2L508.8 453.6L467.5 453.2L345 444.4Z" fill="#00ffff"/><path d="M446 434.4L505 434.4" stroke="#ff00ff" stroke-width="1"/><ellipse cx="353.6" cy="417.6" rx="6" ry="2.7" fill="#ff00ff"/><ellipse cx="352.2" cy="445" rx="6.4" ry="2.7" fill="#ff00ff"/><path d="M352.4 419L352.4 444" stroke="#ff00ff" stroke-width="1.3"/><path d="M358.8 419L358.8 444" stroke="#ff00ff" stroke-width="1.3"/><path d="M346.5 418.8L346.5 441" stroke="#ee0000" stroke-width="1.1"/><path d="M345 425L348.4 425" stroke="#ee0000" stroke-width="1"/><path d="M345 438L348.4 438" stroke="#ee0000" stroke-width="1"/><rect x="352.6" y="423" width="6" height="6.4" fill="#ffffff" opacity="0.92"/><rect x="352.6" y="436" width="6" height="6.4" fill="#ffffff" opacity="0.92"/><rect x="354.4" y="423.8" width="3.1" height="4.8" fill="#00ff00"/><rect x="354.4" y="434.4" width="3.1" height="4.4" fill="#00ff00"/><path d="M378.4 418L378.4 446.4" stroke="#ff00ff" stroke-width="1"/><rect x="375.4" y="419.75" width="3.4" height="13.88" fill="#ffffff" opacity="0.93"/><rect x="378.2" y="422" width="1.3" height="1.5" fill="#ff00ff"/><rect x="378.2" y="426" width="1.3" height="1.5" fill="#ff00ff"/><rect x="378.2" y="430" width="1.3" height="1.5" fill="#ff00ff"/><path d="M378.8 423L380.8 424.6L378.8 426.2" fill="none" stroke="#ff00ff" stroke-width="0.8"/><path d="M378.8 428.6L380.8 430.2L378.8 431.8" fill="none" stroke="#ff00ff" stroke-width="0.8"/><path d="M399 418L399 447.8" stroke="#ff00ff" stroke-width="1"/><rect x="396" y="420.29" width="3.4" height="13.8" fill="#ffffff" opacity="0.93"/><rect x="398.8" y="422" width="1.3" height="1.5" fill="#ff00ff"/><rect x="398.8" y="426" width="1.3" height="1.5" fill="#ff00ff"/><rect x="398.8" y="430" width="1.3" height="1.5" fill="#ff00ff"/><path d="M399.4 423L401.4 424.6L399.4 426.2" fill="none" stroke="#ff00ff" stroke-width="0.8"/><path d="M399.4 428.6L401.4 430.2L399.4 431.8" fill="none" stroke="#ff00ff" stroke-width="0.8"/><path d="M419.6 418L419.6 449.2" stroke="#ff00ff" stroke-width="1"/><rect x="416.6" y="420.84" width="3.4" height="13.72" fill="#ffffff" opacity="0.93"/><rect x="419.4" y="422" width="1.3" height="1.5" fill="#ff00ff"/><rect x="419.4" y="426" width="1.3" height="1.5" fill="#ff00ff"/><rect x="419.4" y="430" width="1.3" height="1.5" fill="#ff00ff"/><path d="M420 423L422 424.6L420 426.2" fill="none" stroke="#ff00ff" stroke-width="0.8"/><path d="M420 428.6L422 430.2L420 431.8" fill="none" stroke="#ff00ff" stroke-width="0.8"/><path d="M440.6 418L440.6 450.63" stroke="#ff00ff" stroke-width="1"/><rect x="437.6" y="421.39" width="3.4" height="13.64" fill="#ffffff" opacity="0.93"/><rect x="440.4" y="422" width="1.3" height="1.5" fill="#ff00ff"/><rect x="440.4" y="426" width="1.3" height="1.5" fill="#ff00ff"/><rect x="440.4" y="430" width="1.3" height="1.5" fill="#ff00ff"/><path d="M441 423L443 424.6L441 426.2" fill="none" stroke="#ff00ff" stroke-width="0.8"/><path d="M441 428.6L443 430.2L441 431.8" fill="none" stroke="#ff00ff" stroke-width="0.8"/><path d="M462.4 418L462.4 452.12" stroke="#ff00ff" stroke-width="1"/><rect x="459.4" y="421.96" width="3.4" height="13.56" fill="#ffffff" opacity="0.93"/><rect x="462.2" y="422" width="1.3" height="1.5" fill="#ff00ff"/><rect x="462.2" y="426" width="1.3" height="1.5" fill="#ff00ff"/><rect x="462.2" y="430" width="1.3" height="1.5" fill="#ff00ff"/><path d="M462.8 423L464.8 424.6L462.8 426.2" fill="none" stroke="#ff00ff" stroke-width="0.8"/><path d="M462.8 428.6L464.8 430.2L462.8 431.8" fill="none" stroke="#ff00ff" stroke-width="0.8"/><path d="M483.8 418L483.8 452" stroke="#ff00ff" stroke-width="1"/><rect x="484.4" y="421" width="3.6" height="14.6" fill="#ffffff" opacity="0.93"/><rect x="483" y="424" width="1.4" height="1.5" fill="#ff00ff"/><rect x="483" y="428" width="1.4" height="1.5" fill="#ff00ff"/><rect x="483" y="432" width="1.4" height="1.5" fill="#ff00ff"/><path d="M505 420L505 452" stroke="#ff00ff" stroke-width="0.9"/><path d="M465.6 420.6L465.4 427L466.2 433.8L468 443L470 451" fill="none" stroke="#1020ff" stroke-width="1.3" stroke-dasharray="3 .8"/><path d="M480 420.6L478.6 426L481 435L484.6 445L488 453" fill="none" stroke="#1020ff" stroke-width="1.3" stroke-dasharray="3 .8"/><path d="M473 437L474 440" fill="none" stroke="#1020ff" stroke-width="1.2"/><path d="M480 414.6L487 414.6" stroke="#ff00ff" stroke-width="1.4"/><path d="M481 415.6L486.6 415.6" stroke="#00ffff" stroke-width="0.7"/><rect x="485" y="437" width="12" height="2.8" fill="#00ff00"/><rect x="473" y="443" width="6.4" height="2.6" fill="#00ff00"/><ellipse cx="500" cy="446" rx="5" ry="1.6" fill="#00ffff"/><path d="M497 437L505 437" stroke="#00ffff" stroke-width="1"/><path d="M505.6 423L507.2 424.4L505.6 425.8" fill="none" stroke="#ff00ff" stroke-width="0.8"/><path d="M505.6 430L507.2 431.4L505.6 432.8" fill="none" stroke="#ff00ff" stroke-width="0.8"/><path d="M508 449.6L512.4 449.6" stroke="#ee0000" stroke-width="1.2"/><path d="M510.6 447.5L510.6 453.8" stroke="#ee0000" stroke-width="1.2"/><path d="M505 434.2L543 434.2L546 433.2L576 433.2L579 432.2L601 432.2" fill="none" stroke="#ff00ff" stroke-width="1.1"/><rect x="525" y="422.4" width="2.4" height="23.6" fill="#00ffff"/><rect x="524" y="421.6" width="4.4" height="1.4" fill="#00ffff" opacity="0.7"/><rect x="527.6" y="426" width="1.2" height="1.4" fill="#ff00ff"/><rect x="527.6" y="438" width="1.2" height="1.4" fill="#ff00ff"/><rect x="527.6" y="443" width="1.2" height="1.4" fill="#ff00ff"/><rect x="546" y="422.4" width="2.4" height="23.6" fill="#00ffff"/><rect x="545" y="421.6" width="4.4" height="1.4" fill="#00ffff" opacity="0.7"/><rect x="548.6" y="426" width="1.2" height="1.4" fill="#ff00ff"/><rect x="548.6" y="438" width="1.2" height="1.4" fill="#ff00ff"/><rect x="548.6" y="443" width="1.2" height="1.4" fill="#ff00ff"/><rect x="567" y="422.4" width="2.4" height="23.6" fill="#00ffff"/><rect x="566" y="421.6" width="4.4" height="1.4" fill="#00ffff" opacity="0.7"/><rect x="569.6" y="426" width="1.2" height="1.4" fill="#ff00ff"/><rect x="569.6" y="438" width="1.2" height="1.4" fill="#ff00ff"/><rect x="569.6" y="443" width="1.2" height="1.4" fill="#ff00ff"/><path d="M584.4 420L593 419L594 444L586 445Z" fill="#00ffff"/><rect x="587.6" y="424" width="5" height="7" fill="#ffffff" opacity="0.9"/><rect x="589" y="431" width="4" height="6" fill="#00ff00" opacity="0.9"/><rect x="588" y="437" width="4.6" height="6" fill="#ffffff" opacity="0.85"/><rect x="586.4" y="423" width="1.4" height="1.4" fill="#ff00ff"/><rect x="591.4" y="441" width="1.4" height="1.4" fill="#ff00ff"/><rect x="341.6" y="463.6" width="258" height="28" fill="none" stroke="#00ffff" stroke-width="1.2"/><path d="M359.6 463.6L359.6 491.6" stroke="#00ffff" stroke-width="1"/><path d="M359.6 463.8L599 463.8" stroke="#ffffff" stroke-width="1.2"/><path d="M359.6 470.4L599 470.4" stroke="#ffffff" stroke-width="1.2"/><path d="M359.6 477.2L599 477.2" stroke="#ffffff" stroke-width="1.2"/><path d="M359.6 484L599 484" stroke="#ffffff" stroke-width="1.2"/><rect x="360.1" y="464" width="2.6" height="20" fill="#ffffff"/><rect x="360.8" y="467" width="1.2" height="1.2" fill="#212830"/><rect x="360.8" y="474" width="1.2" height="1.2" fill="#212830"/><rect x="360.8" y="481" width="1.2" height="1.2" fill="#212830"/><rect x="380.9" y="464" width="2.6" height="20" fill="#ffffff"/><rect x="381.6" y="467" width="1.2" height="1.2" fill="#212830"/><rect x="381.6" y="474" width="1.2" height="1.2" fill="#212830"/><rect x="381.6" y="481" width="1.2" height="1.2" fill="#212830"/><rect x="401.7" y="464" width="2.6" height="20" fill="#ffffff"/><rect x="402.4" y="467" width="1.2" height="1.2" fill="#212830"/><rect x="402.4" y="474" width="1.2" height="1.2" fill="#212830"/><rect x="402.4" y="481" width="1.2" height="1.2" fill="#212830"/><rect x="422.5" y="464" width="2.6" height="20" fill="#ffffff"/><rect x="423.2" y="467" width="1.2" height="1.2" fill="#212830"/><rect x="423.2" y="474" width="1.2" height="1.2" fill="#212830"/><rect x="423.2" y="481" width="1.2" height="1.2" fill="#212830"/><rect x="443.3" y="464" width="2.6" height="20" fill="#ffffff"/><rect x="444" y="467" width="1.2" height="1.2" fill="#212830"/><rect x="444" y="474" width="1.2" height="1.2" fill="#212830"/><rect x="444" y="481" width="1.2" height="1.2" fill="#212830"/><rect x="464.1" y="464" width="2.6" height="20" fill="#ffffff"/><rect x="464.8" y="467" width="1.2" height="1.2" fill="#212830"/><rect x="464.8" y="474" width="1.2" height="1.2" fill="#212830"/><rect x="464.8" y="481" width="1.2" height="1.2" fill="#212830"/><rect x="484.9" y="464" width="2.6" height="20" fill="#ffffff"/><rect x="485.6" y="467" width="1.2" height="1.2" fill="#212830"/><rect x="485.6" y="474" width="1.2" height="1.2" fill="#212830"/><rect x="485.6" y="481" width="1.2" height="1.2" fill="#212830"/><rect x="505.7" y="464" width="2.6" height="20" fill="#ffffff"/><rect x="506.4" y="467" width="1.2" height="1.2" fill="#212830"/><rect x="506.4" y="474" width="1.2" height="1.2" fill="#212830"/><rect x="506.4" y="481" width="1.2" height="1.2" fill="#212830"/><rect x="526.5" y="464" width="2.6" height="20" fill="#ffffff"/><rect x="527.2" y="467" width="1.2" height="1.2" fill="#212830"/><rect x="527.2" y="474" width="1.2" height="1.2" fill="#212830"/><rect x="527.2" y="481" width="1.2" height="1.2" fill="#212830"/><rect x="547.3" y="464" width="2.6" height="20" fill="#ffffff"/><rect x="548" y="467" width="1.2" height="1.2" fill="#212830"/><rect x="548" y="474" width="1.2" height="1.2" fill="#212830"/><rect x="548" y="481" width="1.2" height="1.2" fill="#212830"/><rect x="568.1" y="464" width="2.6" height="20" fill="#ffffff"/><rect x="568.8" y="467" width="1.2" height="1.2" fill="#212830"/><rect x="568.8" y="474" width="1.2" height="1.2" fill="#212830"/><rect x="568.8" y="481" width="1.2" height="1.2" fill="#212830"/><rect x="588.9" y="464" width="2.6" height="20" fill="#ffffff"/><rect x="589.6" y="467" width="1.2" height="1.2" fill="#212830"/><rect x="589.6" y="474" width="1.2" height="1.2" fill="#212830"/><rect x="589.6" y="481" width="1.2" height="1.2" fill="#212830"/><path d="M341.6 470.4L359.6 470.4" stroke="#00ffff" stroke-width="0.7"/><path d="M341.6 477.2L359.6 477.2" stroke="#00ffff" stroke-width="0.7"/><path d="M341.6 484L359.6 484" stroke="#00ffff" stroke-width="0.9"/><rect x="346" y="466" width="9" height="2.2" fill="#00ff00" opacity="0.9"/><rect x="349" y="465.4" width="1.4" height="3.2" fill="#212830"/><rect x="346" y="472.8" width="9" height="2.2" fill="#00ff00" opacity="0.9"/><rect x="349" y="472.2" width="1.4" height="3.2" fill="#212830"/><rect x="346" y="479.6" width="9" height="2.2" fill="#00ff00" opacity="0.9"/><rect x="349" y="479" width="1.4" height="3.2" fill="#212830"/><rect x="343" y="484.8" width="5" height="4.2" fill="#00ff00"/><rect x="352" y="487.4" width="6.6" height="3.2" fill="#00ff00"/><path d="M342.4 490.6L359 485" stroke="#ffffff" stroke-width="1"/><path d="M376 485.4L410 486L440 486.8L475 487.8L520 489L582 490" fill="none" stroke="#ffffff" stroke-width="1.3"/><path d="M410 485.2L470 485.6L520 487L560 488.6" fill="none" stroke="#ffffff" stroke-width="0.9" opacity="0.85"/><rect x="478" y="471.4" width="6" height="3.6" fill="#ffffff" opacity="0.9"/><path d="M474.6 475L480 471.6" fill="none" stroke="#ffffff" stroke-width="1.2"/><rect x="466.2" y="503.4" width="265.4" height="6.8" fill="#ffffff"/><rect x="468.4" y="505" width="5.6" height="5.4" fill="#2a6be0"/><rect x="475" y="507.5" width="38.4" height="2" fill="#212830"/><rect x="517" y="507.5" width="43" height="2" fill="#212830"/><path d="M515.2 503.4L515.2 510" stroke="#212830" stroke-width="1.6"/><rect x="562.4" y="505" width="12" height="4.5" fill="#212830"/><rect x="593.6" y="505" width="11.4" height="4.5" fill="#212830"/><rect x="608" y="505" width="4" height="4.5" fill="#212830"/><rect x="615" y="505" width="4.6" height="4.5" fill="#212830"/><rect x="622" y="505" width="8" height="4.5" fill="#212830"/><rect x="633" y="505" width="7" height="4.5" fill="#212830"/><rect x="647" y="505" width="8" height="4.5" fill="#212830"/><rect x="658" y="505" width="6" height="4.5" fill="#212830"/><rect x="667" y="505" width="13" height="4.5" fill="#212830"/><rect x="683" y="505" width="7" height="4.5" fill="#212830"/><rect x="708" y="505" width="6" height="4.5" fill="#212830"/><rect x="717" y="505" width="5" height="4.5" fill="#212830"/><rect x="724" y="505" width="5.6" height="4.5" fill="#212830"/><rect x="479.2" y="512.2" width="3.8" height="3.6" fill="#ffffff"/><rect x="692" y="501.6" width="10" height="2" fill="#ffffff" opacity="0.7"/><path d="M635 327.4L653 327.4" stroke="#00ffff" stroke-width="1.2"/><path d="M636 326L650 326" stroke="#ff00ff" stroke-width="0.8" stroke-opacity="0.7"/><rect x="656" y="325" width="5" height="3" fill="#ffffff"/><path d="M631 325L634.6 323L635 325.6Z" fill="#00ff00"/><rect x="656" y="322.4" width="5" height="2.6" fill="#00ff00"/><path d="M618 331.5L670 331.5" stroke="#ff00ff" stroke-width="1.1"/><path d="M619 329.6L619 334" stroke="#ff00ff" stroke-width="0.8"/><path d="M623 329.6L623 334" stroke="#ff00ff" stroke-width="0.8"/><path d="M665 329.6L665 334" stroke="#ff00ff" stroke-width="0.8"/><path d="M668 329.6L668 334" stroke="#ff00ff" stroke-width="0.8"/><rect x="618.6" y="329.8" width="2.4" height="3.2" fill="#ffffff" opacity="0.85"/><rect x="664" y="329.8" width="5" height="3.2" fill="#ffffff" opacity="0.85"/><rect x="641" y="329.6" width="6" height="1.6" fill="#ffffff" opacity="0.85"/><rect x="623" y="332.6" width="12.6" height="9.4" fill="#00ff00"/><rect x="630" y="335.6" width="6" height="1.8" fill="#212830"/><rect x="631" y="339.4" width="5" height="1" fill="#212830"/><rect x="620.4" y="342" width="46.6" height="8.8" rx="2.2" fill="#00ffff" fill-opacity=".38" stroke="#00ffff" stroke-width="1.2"/><path d="M621 344.6L666.6 344.6" stroke="#00ffff" stroke-width="0.9" stroke-opacity="0.8"/><path d="M622.6 344.8L622.6 350.4" stroke="#00ffff" stroke-width="1.1" stroke-opacity="0.9"/><path d="M625.15 344.8L625.15 350.4" stroke="#ffffff" stroke-width="1.1" stroke-opacity="0.9"/><path d="M627.7 344.8L627.7 350.4" stroke="#00ffff" stroke-width="1.1" stroke-opacity="0.9"/><path d="M630.25 344.8L630.25 350.4" stroke="#00ffff" stroke-width="1.1" stroke-opacity="0.9"/><path d="M632.8 344.8L632.8 350.4" stroke="#ffffff" stroke-width="1.1" stroke-opacity="0.9"/><path d="M635.35 344.8L635.35 350.4" stroke="#00ffff" stroke-width="1.1" stroke-opacity="0.9"/><path d="M637.9 344.8L637.9 350.4" stroke="#00ffff" stroke-width="1.1" stroke-opacity="0.9"/><path d="M640.45 344.8L640.45 350.4" stroke="#ffffff" stroke-width="1.1" stroke-opacity="0.9"/><path d="M643 344.8L643 350.4" stroke="#00ffff" stroke-width="1.1" stroke-opacity="0.9"/><path d="M645.55 344.8L645.55 350.4" stroke="#00ffff" stroke-width="1.1" stroke-opacity="0.9"/><path d="M648.1 344.8L648.1 350.4" stroke="#ffffff" stroke-width="1.1" stroke-opacity="0.9"/><path d="M650.65 344.8L650.65 350.4" stroke="#00ffff" stroke-width="1.1" stroke-opacity="0.9"/><path d="M653.2 344.8L653.2 350.4" stroke="#00ffff" stroke-width="1.1" stroke-opacity="0.9"/><path d="M655.75 344.8L655.75 350.4" stroke="#ffffff" stroke-width="1.1" stroke-opacity="0.9"/><path d="M658.3 344.8L658.3 350.4" stroke="#00ffff" stroke-width="1.1" stroke-opacity="0.9"/><path d="M660.85 344.8L660.85 350.4" stroke="#00ffff" stroke-width="1.1" stroke-opacity="0.9"/><path d="M663.4 344.8L663.4 350.4" stroke="#ffffff" stroke-width="1.1" stroke-opacity="0.9"/><path d="M665.95 344.8L665.95 350.4" stroke="#00ffff" stroke-width="1.1" stroke-opacity="0.9"/><path d="M620.4 351L626 354.2L661.4 354.2L667 351" fill="none" stroke="#00ffff" stroke-width="1.1"/><rect x="662" y="338" width="5" height="5" fill="none" stroke="#ff00ff" stroke-width="0.9"/><rect x="663" y="337.6" width="3.4" height="1.8" fill="#ffffff" opacity="0.85"/><path d="M616.6 341L616.6 354.6" stroke="#ff00ff" stroke-width="1"/><path d="M619.4 341L619.4 354.6" stroke="#ff00ff" stroke-width="0.9"/><rect x="615.6" y="343" width="2.6" height="9" fill="#ffffff" opacity="0.8"/><path d="M615.6 341.4L620.4 341.4" stroke="#ff00ff" stroke-width="0.9"/><path d="M615.6 348L620.4 348" stroke="#ff00ff" stroke-width="0.9"/><path d="M615.6 354.4L620.4 354.4" stroke="#ff00ff" stroke-width="0.9"/><path d="M628 354.2L628 399" stroke="#00ffff" stroke-width="1.2"/><path d="M633 354.2L633 399" stroke="#00ffff" stroke-width="1.2"/><path d="M628 399L633 399" stroke="#00ffff" stroke-width="1.1"/><path d="M630.5 356L630.5 398" stroke="#ff00ff" stroke-width="1.1"/><rect x="628.8" y="370" width="3.4" height="2.4" fill="#ffffff" opacity="0.9"/><rect x="628.8" y="376" width="3.4" height="2.4" fill="#ffffff" opacity="0.9"/><rect x="628.8" y="388" width="3.4" height="2.4" fill="#ffffff" opacity="0.9"/><rect x="629" y="391" width="3" height="7" fill="#ff00ff" opacity="0.85"/><path d="M654.6 354.2L654.6 399" stroke="#00ffff" stroke-width="1.2"/><path d="M659.6 354.2L659.6 399" stroke="#00ffff" stroke-width="1.2"/><path d="M654.6 399L659.6 399" stroke="#00ffff" stroke-width="1.1"/><path d="M657.1 356L657.1 398" stroke="#ff00ff" stroke-width="1.1"/><rect x="655.4" y="370" width="3.4" height="2.4" fill="#ffffff" opacity="0.9"/><rect x="655.4" y="376" width="3.4" height="2.4" fill="#ffffff" opacity="0.9"/><rect x="655.4" y="388" width="3.4" height="2.4" fill="#ffffff" opacity="0.9"/><rect x="655.6" y="391" width="3" height="7" fill="#ff00ff" opacity="0.85"/><rect x="633" y="364.8" width="21.6" height="4.2" fill="none" stroke="#00ffff" stroke-width="1.1"/><rect x="641.4" y="365.7" width="2.6" height="2.4" fill="#ff00ff"/><rect x="643" y="365.9" width="1.4" height="2" fill="#ffffff"/><rect x="633" y="378.2" width="21.6" height="5" fill="none" stroke="#00ffff" stroke-width="1.1"/><rect x="641.4" y="379.5" width="2.6" height="2.4" fill="#ff00ff"/><rect x="643" y="379.7" width="1.4" height="2" fill="#ffffff"/><path d="M621 359.6L666 359.6" stroke="#ff00ff" stroke-width="1.1"/><path d="M621 357.6L621 361.4" stroke="#ff00ff" stroke-width="0.8"/><path d="M628 357.6L628 361.4" stroke="#ff00ff" stroke-width="0.8"/><path d="M633 357.6L633 361.4" stroke="#ff00ff" stroke-width="0.8"/><path d="M654.6 357.6L654.6 361.4" stroke="#ff00ff" stroke-width="0.8"/><path d="M659.6 357.6L659.6 361.4" stroke="#ff00ff" stroke-width="0.8"/><path d="M666 357.6L666 361.4" stroke="#ff00ff" stroke-width="0.8"/><rect x="622.6" y="358" width="4.8" height="3" fill="#ffffff" opacity="0.85"/><rect x="641" y="358" width="5" height="3" fill="#ffffff" opacity="0.85"/><rect x="660" y="358" width="5" height="3" fill="#ffffff" opacity="0.8"/><path d="M667.6 337L667.6 358" stroke="#ff00ff" stroke-width="0.9" stroke-dasharray="3 1.4"/><path d="M667.6 365L667.6 371" stroke="#ff00ff" stroke-width="1.2"/><path d="M667.6 375L667.6 391" stroke="#00ff00" stroke-width="1.3" stroke-opacity="0.9"/><path d="M667.6 391L667.6 399" stroke="#ff00ff" stroke-width="1" stroke-dasharray="2.4 1.4"/><path d="M666.6 375L666.6 391" stroke="#ff00ff" stroke-width="0.7"/><path d="M694 327.4L712 327.4" stroke="#00ffff" stroke-width="1.2"/><path d="M695 326L709 326" stroke="#ff00ff" stroke-width="0.8" stroke-opacity="0.7"/><rect x="713" y="325.4" width="6" height="3" fill="#ffffff"/><path d="M690 325L693.6 323L694 325.6Z" fill="#00ff00"/><rect x="713" y="322.6" width="6" height="3" fill="#00ff00"/><path d="M677 331.5L729 331.5" stroke="#ff00ff" stroke-width="1.1"/><path d="M678 329.6L678 334" stroke="#ff00ff" stroke-width="0.8"/><path d="M682 329.6L682 334" stroke="#ff00ff" stroke-width="0.8"/><path d="M724 329.6L724 334" stroke="#ff00ff" stroke-width="0.8"/><path d="M727 329.6L727 334" stroke="#ff00ff" stroke-width="0.8"/><rect x="677.6" y="329.8" width="2.4" height="3.2" fill="#ffffff" opacity="0.85"/><rect x="723" y="329.8" width="5" height="3.2" fill="#ffffff" opacity="0.85"/><rect x="700" y="329.6" width="6" height="1.6" fill="#ffffff" opacity="0.85"/><rect x="682" y="332.6" width="12.6" height="9.4" fill="#00ff00"/><rect x="689" y="335.6" width="6" height="1.8" fill="#212830"/><rect x="690" y="339.4" width="5" height="1" fill="#212830"/><rect x="679.4" y="342" width="46.6" height="8.8" rx="2.2" fill="#00ffff" fill-opacity=".38" stroke="#00ffff" stroke-width="1.2"/><path d="M680 344.6L725.6 344.6" stroke="#00ffff" stroke-width="0.9" stroke-opacity="0.8"/><path d="M681.6 344.8L681.6 350.4" stroke="#00ffff" stroke-width="1.1" stroke-opacity="0.9"/><path d="M684.15 344.8L684.15 350.4" stroke="#ffffff" stroke-width="1.1" stroke-opacity="0.9"/><path d="M686.7 344.8L686.7 350.4" stroke="#00ffff" stroke-width="1.1" stroke-opacity="0.9"/><path d="M689.25 344.8L689.25 350.4" stroke="#00ffff" stroke-width="1.1" stroke-opacity="0.9"/><path d="M691.8 344.8L691.8 350.4" stroke="#ffffff" stroke-width="1.1" stroke-opacity="0.9"/><path d="M694.35 344.8L694.35 350.4" stroke="#00ffff" stroke-width="1.1" stroke-opacity="0.9"/><path d="M696.9 344.8L696.9 350.4" stroke="#00ffff" stroke-width="1.1" stroke-opacity="0.9"/><path d="M699.45 344.8L699.45 350.4" stroke="#ffffff" stroke-width="1.1" stroke-opacity="0.9"/><path d="M702 344.8L702 350.4" stroke="#00ffff" stroke-width="1.1" stroke-opacity="0.9"/><path d="M704.55 344.8L704.55 350.4" stroke="#00ffff" stroke-width="1.1" stroke-opacity="0.9"/><path d="M707.1 344.8L707.1 350.4" stroke="#ffffff" stroke-width="1.1" stroke-opacity="0.9"/><path d="M709.65 344.8L709.65 350.4" stroke="#00ffff" stroke-width="1.1" stroke-opacity="0.9"/><path d="M712.2 344.8L712.2 350.4" stroke="#00ffff" stroke-width="1.1" stroke-opacity="0.9"/><path d="M714.75 344.8L714.75 350.4" stroke="#ffffff" stroke-width="1.1" stroke-opacity="0.9"/><path d="M717.3 344.8L717.3 350.4" stroke="#00ffff" stroke-width="1.1" stroke-opacity="0.9"/><path d="M719.85 344.8L719.85 350.4" stroke="#00ffff" stroke-width="1.1" stroke-opacity="0.9"/><path d="M722.4 344.8L722.4 350.4" stroke="#ffffff" stroke-width="1.1" stroke-opacity="0.9"/><path d="M724.95 344.8L724.95 350.4" stroke="#00ffff" stroke-width="1.1" stroke-opacity="0.9"/><path d="M679.4 351L685 354.2L720.4 354.2L726 351" fill="none" stroke="#00ffff" stroke-width="1.1"/><rect x="721" y="338" width="5" height="5" fill="none" stroke="#ff00ff" stroke-width="0.9"/><rect x="722" y="337.6" width="3.4" height="1.8" fill="#ffffff" opacity="0.85"/><path d="M675.6 341L675.6 354.6" stroke="#ff00ff" stroke-width="1"/><path d="M678.4 341L678.4 354.6" stroke="#ff00ff" stroke-width="0.9"/><rect x="674.6" y="343" width="2.6" height="9" fill="#ffffff" opacity="0.8"/><path d="M674.6 341.4L679.4 341.4" stroke="#ff00ff" stroke-width="0.9"/><path d="M674.6 348L679.4 348" stroke="#ff00ff" stroke-width="0.9"/><path d="M674.6 354.4L679.4 354.4" stroke="#ff00ff" stroke-width="0.9"/><path d="M687 354.2L687 399" stroke="#00ffff" stroke-width="1.2"/><path d="M692 354.2L692 399" stroke="#00ffff" stroke-width="1.2"/><path d="M687 399L692 399" stroke="#00ffff" stroke-width="1.1"/><path d="M689.5 356L689.5 398" stroke="#ff00ff" stroke-width="1.1"/><rect x="687.8" y="370" width="3.4" height="2.4" fill="#ffffff" opacity="0.9"/><rect x="687.8" y="376" width="3.4" height="2.4" fill="#ffffff" opacity="0.9"/><rect x="687.8" y="388" width="3.4" height="2.4" fill="#ffffff" opacity="0.9"/><rect x="688" y="391" width="3" height="7" fill="#ff00ff" opacity="0.85"/><path d="M713.6 354.2L713.6 399" stroke="#00ffff" stroke-width="1.2"/><path d="M718.6 354.2L718.6 399" stroke="#00ffff" stroke-width="1.2"/><path d="M713.6 399L718.6 399" stroke="#00ffff" stroke-width="1.1"/><path d="M716.1 356L716.1 398" stroke="#ff00ff" stroke-width="1.1"/><rect x="714.4" y="370" width="3.4" height="2.4" fill="#ffffff" opacity="0.9"/><rect x="714.4" y="376" width="3.4" height="2.4" fill="#ffffff" opacity="0.9"/><rect x="714.4" y="388" width="3.4" height="2.4" fill="#ffffff" opacity="0.9"/><rect x="714.6" y="391" width="3" height="7" fill="#ff00ff" opacity="0.85"/><rect x="692" y="364.8" width="21.6" height="4.2" fill="none" stroke="#00ffff" stroke-width="1.1"/><rect x="700.4" y="365.7" width="2.6" height="2.4" fill="#ff00ff"/><rect x="702" y="365.9" width="1.4" height="2" fill="#ffffff"/><rect x="692" y="378.2" width="21.6" height="5" fill="none" stroke="#00ffff" stroke-width="1.1"/><rect x="700.4" y="379.5" width="2.6" height="2.4" fill="#ff00ff"/><rect x="702" y="379.7" width="1.4" height="2" fill="#ffffff"/><path d="M680 359.6L725 359.6" stroke="#ff00ff" stroke-width="1.1"/><path d="M680 357.6L680 361.4" stroke="#ff00ff" stroke-width="0.8"/><path d="M687 357.6L687 361.4" stroke="#ff00ff" stroke-width="0.8"/><path d="M692 357.6L692 361.4" stroke="#ff00ff" stroke-width="0.8"/><path d="M713.6 357.6L713.6 361.4" stroke="#ff00ff" stroke-width="0.8"/><path d="M718.6 357.6L718.6 361.4" stroke="#ff00ff" stroke-width="0.8"/><path d="M725 357.6L725 361.4" stroke="#ff00ff" stroke-width="0.8"/><rect x="681.6" y="358" width="4.8" height="3" fill="#ffffff" opacity="0.85"/><rect x="700" y="358" width="5" height="3" fill="#ffffff" opacity="0.85"/><rect x="719" y="358" width="5" height="3" fill="#ffffff" opacity="0.8"/><path d="M726.6 337L726.6 358" stroke="#ff00ff" stroke-width="0.9" stroke-dasharray="3 1.4"/><path d="M726.6 365L726.6 371" stroke="#ff00ff" stroke-width="1.2"/><path d="M726.6 375L726.6 391" stroke="#00ff00" stroke-width="1.3" stroke-opacity="0.9"/><path d="M726.6 391L726.6 399" stroke="#ff00ff" stroke-width="1" stroke-dasharray="2.4 1.4"/><path d="M725.6 375L725.6 391" stroke="#ff00ff" stroke-width="0.7"/><rect x="640" y="373" width="13" height="4.6" fill="#ffffff" opacity="0.95"/><rect x="644" y="374.4" width="2" height="1.2" fill="#212830"/><rect x="634" y="401" width="4" height="2.4" fill="#00ff00"/><rect x="659.4" y="400" width="6" height="5" fill="#00ff00"/><rect x="656.6" y="401.6" width="1.8" height="3.8" fill="#ffffff"/><path d="M621 408L672 408" stroke="#ff00ff" stroke-width="1.2"/><path d="M621.6 406L621.6 410" stroke="#ff00ff" stroke-width="0.8"/><path d="M671.4 406L671.4 410" stroke="#ff00ff" stroke-width="0.8"/><rect x="622" y="406.2" width="4" height="2.6" fill="#ffffff" opacity="0.85"/><rect x="645" y="406.2" width="5" height="1.6" fill="#ffffff" opacity="0.85"/><rect x="667" y="406" width="5" height="3" fill="#ffffff" opacity="0.9"/><rect x="626" y="410" width="12" height="9" fill="#00ff00"/><rect x="633" y="412.6" width="5.6" height="1.4" fill="#212830"/><rect x="639" y="413" width="13" height="4" fill="#ffffff" opacity="0.95"/><rect x="642" y="414.4" width="2" height="1" fill="#212830"/><path d="M620 418L620 432" stroke="#ff00ff" stroke-width="1.1"/><path d="M618.6 418L618.6 432" stroke="#ff00ff" stroke-width="0.7"/><rect x="617.6" y="420" width="2" height="10" fill="#ffffff" opacity="0.8"/><rect x="666" y="412" width="6" height="4.6" fill="none" stroke="#ff00ff" stroke-width="0.9"/><rect x="667.4" y="411.6" width="3.6" height="1.8" fill="#ffffff" opacity="0.9"/><rect x="622.6" y="420" width="48.4" height="3" fill="#00ffff"/><rect x="623.4" y="423" width="1.7" height="4.8" fill="#00ffff"/><rect x="626.15" y="423" width="1.7" height="4.8" fill="#00ffff"/><rect x="628.9" y="423" width="1.7" height="4.8" fill="#00ffff"/><rect x="631.65" y="423" width="1.7" height="4.8" fill="#00ffff"/><rect x="634.4" y="423" width="1.7" height="4.8" fill="#00ffff"/><rect x="637.15" y="423" width="1.7" height="4.8" fill="#00ffff"/><rect x="639.9" y="423" width="1.7" height="4.8" fill="#00ffff"/><rect x="642.65" y="423" width="1.7" height="4.8" fill="#00ffff"/><rect x="645.4" y="423" width="1.7" height="4.8" fill="#00ffff"/><rect x="648.15" y="423" width="1.7" height="4.8" fill="#00ffff"/><rect x="650.9" y="423" width="1.7" height="4.8" fill="#00ffff"/><rect x="653.65" y="423" width="1.7" height="4.8" fill="#00ffff"/><rect x="656.4" y="423" width="1.7" height="4.8" fill="#00ffff"/><rect x="659.15" y="423" width="1.7" height="4.8" fill="#00ffff"/><rect x="661.9" y="423" width="1.7" height="4.8" fill="#00ffff"/><rect x="664.65" y="423" width="1.7" height="4.8" fill="#00ffff"/><rect x="667.4" y="423" width="1.7" height="4.8" fill="#00ffff"/><rect x="670.15" y="423" width="1.7" height="4.8" fill="#00ffff"/><rect x="622.6" y="427.6" width="48.4" height="10" fill="none" stroke="#00ffff" stroke-width="1.2"/><path d="M628 430.6L647 430.6" stroke="#ffffff" stroke-width="0.9" stroke-opacity="0.9"/><path d="M628 432L631 437" fill="none" stroke="#ffffff" stroke-width="0.9"/><path d="M622 441L671.6 441" stroke="#00ffff" stroke-width="1.2"/><path d="M622.8 427.6L622.8 443.4" stroke="#00ffff" stroke-width="1.1"/><path d="M671 427.6L671 443.4" stroke="#00ffff" stroke-width="1.1"/><path d="M671.6 420L671.6 438" stroke="#00ff00" stroke-width="1.2"/><path d="M672.6 418L672.6 438" stroke="#ff00ff" stroke-width="0.8"/><rect x="656" y="441.8" width="8" height="3.8" fill="#ffffff" opacity="0.95"/><rect x="659" y="443" width="1.4" height="1.4" fill="#212830"/><rect x="702" y="400.6" width="8" height="3.8" fill="#ffffff"/><rect x="603" y="445.7" width="41" height="2.8" fill="#ffffff" opacity="0.95"/><rect x="606" y="445.6" width="0.9" height="1.2" fill="#212830" opacity="0.75"/><rect x="608.6" y="446.4" width="0.9" height="1.2" fill="#212830" opacity="0.75"/><rect x="612.1" y="447.2" width="0.9" height="1.2" fill="#212830" opacity="0.75"/><rect x="616.5" y="445.6" width="0.9" height="1.2" fill="#212830" opacity="0.75"/><rect x="621.8" y="446.4" width="0.9" height="1.2" fill="#212830" opacity="0.75"/><rect x="624.4" y="447.2" width="0.9" height="1.2" fill="#212830" opacity="0.75"/><rect x="627.9" y="445.6" width="0.9" height="1.2" fill="#212830" opacity="0.75"/><rect x="632.3" y="446.4" width="0.9" height="1.2" fill="#212830" opacity="0.75"/><rect x="637.6" y="447.2" width="0.9" height="1.2" fill="#212830" opacity="0.75"/><rect x="640.2" y="445.6" width="0.9" height="1.2" fill="#212830" opacity="0.75"/><rect x="603" y="450.3" width="54" height="2.8" fill="#ffffff" opacity="0.95"/><rect x="606" y="450.2" width="0.9" height="1.2" fill="#212830" opacity="0.75"/><rect x="608.6" y="451" width="0.9" height="1.2" fill="#212830" opacity="0.75"/><rect x="612.1" y="451.8" width="0.9" height="1.2" fill="#212830" opacity="0.75"/><rect x="616.5" y="450.2" width="0.9" height="1.2" fill="#212830" opacity="0.75"/><rect x="621.8" y="451" width="0.9" height="1.2" fill="#212830" opacity="0.75"/><rect x="624.4" y="451.8" width="0.9" height="1.2" fill="#212830" opacity="0.75"/><rect x="627.9" y="450.2" width="0.9" height="1.2" fill="#212830" opacity="0.75"/><rect x="632.3" y="451" width="0.9" height="1.2" fill="#212830" opacity="0.75"/><rect x="637.6" y="451.8" width="0.9" height="1.2" fill="#212830" opacity="0.75"/><rect x="640.2" y="450.2" width="0.9" height="1.2" fill="#212830" opacity="0.75"/><rect x="643.7" y="451" width="0.9" height="1.2" fill="#212830" opacity="0.75"/><rect x="648.1" y="451.8" width="0.9" height="1.2" fill="#212830" opacity="0.75"/><rect x="653.4" y="450.2" width="0.9" height="1.2" fill="#212830" opacity="0.75"/><rect x="605" y="454.5" width="52" height="2.8" fill="#ffffff" opacity="0.95"/><rect x="608" y="454.4" width="0.9" height="1.2" fill="#212830" opacity="0.75"/><rect x="610.6" y="455.2" width="0.9" height="1.2" fill="#212830" opacity="0.75"/><rect x="614.1" y="456" width="0.9" height="1.2" fill="#212830" opacity="0.75"/><rect x="618.5" y="454.4" width="0.9" height="1.2" fill="#212830" opacity="0.75"/><rect x="623.8" y="455.2" width="0.9" height="1.2" fill="#212830" opacity="0.75"/><rect x="626.4" y="456" width="0.9" height="1.2" fill="#212830" opacity="0.75"/><rect x="629.9" y="454.4" width="0.9" height="1.2" fill="#212830" opacity="0.75"/><rect x="634.3" y="455.2" width="0.9" height="1.2" fill="#212830" opacity="0.75"/><rect x="639.6" y="456" width="0.9" height="1.2" fill="#212830" opacity="0.75"/><rect x="642.2" y="454.4" width="0.9" height="1.2" fill="#212830" opacity="0.75"/><rect x="645.7" y="455.2" width="0.9" height="1.2" fill="#212830" opacity="0.75"/><rect x="650.1" y="456" width="0.9" height="1.2" fill="#212830" opacity="0.75"/><rect x="603" y="458.7" width="64" height="2.8" fill="#ffffff" opacity="0.95"/><rect x="606" y="458.6" width="0.9" height="1.2" fill="#212830" opacity="0.75"/><rect x="608.6" y="459.4" width="0.9" height="1.2" fill="#212830" opacity="0.75"/><rect x="612.1" y="460.2" width="0.9" height="1.2" fill="#212830" opacity="0.75"/><rect x="616.5" y="458.6" width="0.9" height="1.2" fill="#212830" opacity="0.75"/><rect x="621.8" y="459.4" width="0.9" height="1.2" fill="#212830" opacity="0.75"/><rect x="624.4" y="460.2" width="0.9" height="1.2" fill="#212830" opacity="0.75"/><rect x="627.9" y="458.6" width="0.9" height="1.2" fill="#212830" opacity="0.75"/><rect x="632.3" y="459.4" width="0.9" height="1.2" fill="#212830" opacity="0.75"/><rect x="637.6" y="460.2" width="0.9" height="1.2" fill="#212830" opacity="0.75"/><rect x="640.2" y="458.6" width="0.9" height="1.2" fill="#212830" opacity="0.75"/><rect x="643.7" y="459.4" width="0.9" height="1.2" fill="#212830" opacity="0.75"/><rect x="648.1" y="460.2" width="0.9" height="1.2" fill="#212830" opacity="0.75"/><rect x="653.4" y="458.6" width="0.9" height="1.2" fill="#212830" opacity="0.75"/><rect x="656" y="459.4" width="0.9" height="1.2" fill="#212830" opacity="0.75"/><rect x="659.5" y="460.2" width="0.9" height="1.2" fill="#212830" opacity="0.75"/><rect x="663.9" y="458.6" width="0.9" height="1.2" fill="#212830" opacity="0.75"/><rect x="603" y="463.1" width="39" height="2.8" fill="#ffffff" opacity="0.95"/><rect x="606" y="463" width="0.9" height="1.2" fill="#212830" opacity="0.75"/><rect x="608.6" y="463.8" width="0.9" height="1.2" fill="#212830" opacity="0.75"/><rect x="612.1" y="464.6" width="0.9" height="1.2" fill="#212830" opacity="0.75"/><rect x="616.5" y="463" width="0.9" height="1.2" fill="#212830" opacity="0.75"/><rect x="621.8" y="463.8" width="0.9" height="1.2" fill="#212830" opacity="0.75"/><rect x="624.4" y="464.6" width="0.9" height="1.2" fill="#212830" opacity="0.75"/><rect x="627.9" y="463" width="0.9" height="1.2" fill="#212830" opacity="0.75"/><rect x="632.3" y="463.8" width="0.9" height="1.2" fill="#212830" opacity="0.75"/><rect x="637.6" y="464.6" width="0.9" height="1.2" fill="#212830" opacity="0.75"/><rect x="603" y="467.3" width="80" height="2.8" fill="#ffffff" opacity="0.95"/><rect x="606" y="467.2" width="0.9" height="1.2" fill="#212830" opacity="0.75"/><rect x="608.6" y="468" width="0.9" height="1.2" fill="#212830" opacity="0.75"/><rect x="612.1" y="468.8" width="0.9" height="1.2" fill="#212830" opacity="0.75"/><rect x="616.5" y="467.2" width="0.9" height="1.2" fill="#212830" opacity="0.75"/><rect x="621.8" y="468" width="0.9" height="1.2" fill="#212830" opacity="0.75"/><rect x="624.4" y="468.8" width="0.9" height="1.2" fill="#212830" opacity="0.75"/><rect x="627.9" y="467.2" width="0.9" height="1.2" fill="#212830" opacity="0.75"/><rect x="632.3" y="468" width="0.9" height="1.2" fill="#212830" opacity="0.75"/><rect x="637.6" y="468.8" width="0.9" height="1.2" fill="#212830" opacity="0.75"/><rect x="640.2" y="467.2" width="0.9" height="1.2" fill="#212830" opacity="0.75"/><rect x="643.7" y="468" width="0.9" height="1.2" fill="#212830" opacity="0.75"/><rect x="648.1" y="468.8" width="0.9" height="1.2" fill="#212830" opacity="0.75"/><rect x="653.4" y="467.2" width="0.9" height="1.2" fill="#212830" opacity="0.75"/><rect x="656" y="468" width="0.9" height="1.2" fill="#212830" opacity="0.75"/><rect x="659.5" y="468.8" width="0.9" height="1.2" fill="#212830" opacity="0.75"/><rect x="663.9" y="467.2" width="0.9" height="1.2" fill="#212830" opacity="0.75"/><rect x="669.2" y="468" width="0.9" height="1.2" fill="#212830" opacity="0.75"/><rect x="671.8" y="468.8" width="0.9" height="1.2" fill="#212830" opacity="0.75"/><rect x="675.3" y="467.2" width="0.9" height="1.2" fill="#212830" opacity="0.75"/><rect x="679.7" y="468" width="0.9" height="1.2" fill="#212830" opacity="0.75"/><rect x="604" y="471.7" width="69" height="2.8" fill="#ffffff" opacity="0.95"/><rect x="607" y="471.6" width="0.9" height="1.2" fill="#212830" opacity="0.75"/><rect x="609.6" y="472.4" width="0.9" height="1.2" fill="#212830" opacity="0.75"/><rect x="613.1" y="473.2" width="0.9" height="1.2" fill="#212830" opacity="0.75"/><rect x="617.5" y="471.6" width="0.9" height="1.2" fill="#212830" opacity="0.75"/><rect x="622.8" y="472.4" width="0.9" height="1.2" fill="#212830" opacity="0.75"/><rect x="625.4" y="473.2" width="0.9" height="1.2" fill="#212830" opacity="0.75"/><rect x="628.9" y="471.6" width="0.9" height="1.2" fill="#212830" opacity="0.75"/><rect x="633.3" y="472.4" width="0.9" height="1.2" fill="#212830" opacity="0.75"/><rect x="638.6" y="473.2" width="0.9" height="1.2" fill="#212830" opacity="0.75"/><rect x="641.2" y="471.6" width="0.9" height="1.2" fill="#212830" opacity="0.75"/><rect x="644.7" y="472.4" width="0.9" height="1.2" fill="#212830" opacity="0.75"/><rect x="649.1" y="473.2" width="0.9" height="1.2" fill="#212830" opacity="0.75"/><rect x="654.4" y="471.6" width="0.9" height="1.2" fill="#212830" opacity="0.75"/><rect x="657" y="472.4" width="0.9" height="1.2" fill="#212830" opacity="0.75"/><rect x="660.5" y="473.2" width="0.9" height="1.2" fill="#212830" opacity="0.75"/><rect x="664.9" y="471.6" width="0.9" height="1.2" fill="#212830" opacity="0.75"/><rect x="670.2" y="472.4" width="0.9" height="1.2" fill="#212830" opacity="0.75"/><rect x="603" y="476.3" width="36" height="2.8" fill="#ffffff" opacity="0.95"/><rect x="606" y="476.2" width="0.9" height="1.2" fill="#212830" opacity="0.75"/><rect x="608.6" y="477" width="0.9" height="1.2" fill="#212830" opacity="0.75"/><rect x="612.1" y="477.8" width="0.9" height="1.2" fill="#212830" opacity="0.75"/><rect x="616.5" y="476.2" width="0.9" height="1.2" fill="#212830" opacity="0.75"/><rect x="621.8" y="477" width="0.9" height="1.2" fill="#212830" opacity="0.75"/><rect x="624.4" y="477.8" width="0.9" height="1.2" fill="#212830" opacity="0.75"/><rect x="627.9" y="476.2" width="0.9" height="1.2" fill="#212830" opacity="0.75"/><rect x="632.3" y="477" width="0.9" height="1.2" fill="#212830" opacity="0.75"/><rect x="606" y="480.7" width="67" height="2.8" fill="#ffffff" opacity="0.95"/><rect x="609" y="480.6" width="0.9" height="1.2" fill="#212830" opacity="0.75"/><rect x="611.6" y="481.4" width="0.9" height="1.2" fill="#212830" opacity="0.75"/><rect x="615.1" y="482.2" width="0.9" height="1.2" fill="#212830" opacity="0.75"/><rect x="619.5" y="480.6" width="0.9" height="1.2" fill="#212830" opacity="0.75"/><rect x="624.8" y="481.4" width="0.9" height="1.2" fill="#212830" opacity="0.75"/><rect x="627.4" y="482.2" width="0.9" height="1.2" fill="#212830" opacity="0.75"/><rect x="630.9" y="480.6" width="0.9" height="1.2" fill="#212830" opacity="0.75"/><rect x="635.3" y="481.4" width="0.9" height="1.2" fill="#212830" opacity="0.75"/><rect x="640.6" y="482.2" width="0.9" height="1.2" fill="#212830" opacity="0.75"/><rect x="643.2" y="480.6" width="0.9" height="1.2" fill="#212830" opacity="0.75"/><rect x="646.7" y="481.4" width="0.9" height="1.2" fill="#212830" opacity="0.75"/><rect x="651.1" y="482.2" width="0.9" height="1.2" fill="#212830" opacity="0.75"/><rect x="656.4" y="480.6" width="0.9" height="1.2" fill="#212830" opacity="0.75"/><rect x="659" y="481.4" width="0.9" height="1.2" fill="#212830" opacity="0.75"/><rect x="662.5" y="482.2" width="0.9" height="1.2" fill="#212830" opacity="0.75"/><rect x="666.9" y="480.6" width="0.9" height="1.2" fill="#212830" opacity="0.75"/><rect x="606" y="485.1" width="44" height="2.8" fill="#ffffff" opacity="0.95"/><rect x="609" y="485" width="0.9" height="1.2" fill="#212830" opacity="0.75"/><rect x="611.6" y="485.8" width="0.9" height="1.2" fill="#212830" opacity="0.75"/><rect x="615.1" y="486.6" width="0.9" height="1.2" fill="#212830" opacity="0.75"/><rect x="619.5" y="485" width="0.9" height="1.2" fill="#212830" opacity="0.75"/><rect x="624.8" y="485.8" width="0.9" height="1.2" fill="#212830" opacity="0.75"/><rect x="627.4" y="486.6" width="0.9" height="1.2" fill="#212830" opacity="0.75"/><rect x="630.9" y="485" width="0.9" height="1.2" fill="#212830" opacity="0.75"/><rect x="635.3" y="485.8" width="0.9" height="1.2" fill="#212830" opacity="0.75"/><rect x="640.6" y="486.6" width="0.9" height="1.2" fill="#212830" opacity="0.75"/><rect x="643.2" y="485" width="0.9" height="1.2" fill="#212830" opacity="0.75"/><rect x="646.7" y="485.8" width="0.9" height="1.2" fill="#212830" opacity="0.75"/><rect x="606" y="489.1" width="66" height="2.8" fill="#ffffff" opacity="0.95"/><rect x="609" y="489" width="0.9" height="1.2" fill="#212830" opacity="0.75"/><rect x="611.6" y="489.8" width="0.9" height="1.2" fill="#212830" opacity="0.75"/><rect x="615.1" y="490.6" width="0.9" height="1.2" fill="#212830" opacity="0.75"/><rect x="619.5" y="489" width="0.9" height="1.2" fill="#212830" opacity="0.75"/><rect x="624.8" y="489.8" width="0.9" height="1.2" fill="#212830" opacity="0.75"/><rect x="627.4" y="490.6" width="0.9" height="1.2" fill="#212830" opacity="0.75"/><rect x="630.9" y="489" width="0.9" height="1.2" fill="#212830" opacity="0.75"/><rect x="635.3" y="489.8" width="0.9" height="1.2" fill="#212830" opacity="0.75"/><rect x="640.6" y="490.6" width="0.9" height="1.2" fill="#212830" opacity="0.75"/><rect x="643.2" y="489" width="0.9" height="1.2" fill="#212830" opacity="0.75"/><rect x="646.7" y="489.8" width="0.9" height="1.2" fill="#212830" opacity="0.75"/><rect x="651.1" y="490.6" width="0.9" height="1.2" fill="#212830" opacity="0.75"/><rect x="656.4" y="489" width="0.9" height="1.2" fill="#212830" opacity="0.75"/><rect x="659" y="489.8" width="0.9" height="1.2" fill="#212830" opacity="0.75"/><rect x="662.5" y="490.6" width="0.9" height="1.2" fill="#212830" opacity="0.75"/><rect x="666.9" y="489" width="0.9" height="1.2" fill="#212830" opacity="0.75"/><rect x="603" y="493.1" width="43" height="2.8" fill="#ffffff" opacity="0.95"/><rect x="606" y="493" width="0.9" height="1.2" fill="#212830" opacity="0.75"/><rect x="608.6" y="493.8" width="0.9" height="1.2" fill="#212830" opacity="0.75"/><rect x="612.1" y="494.6" width="0.9" height="1.2" fill="#212830" opacity="0.75"/><rect x="616.5" y="493" width="0.9" height="1.2" fill="#212830" opacity="0.75"/><rect x="621.8" y="493.8" width="0.9" height="1.2" fill="#212830" opacity="0.75"/><rect x="624.4" y="494.6" width="0.9" height="1.2" fill="#212830" opacity="0.75"/><rect x="627.9" y="493" width="0.9" height="1.2" fill="#212830" opacity="0.75"/><rect x="632.3" y="493.8" width="0.9" height="1.2" fill="#212830" opacity="0.75"/><rect x="637.6" y="494.6" width="0.9" height="1.2" fill="#212830" opacity="0.75"/><rect x="640.2" y="493" width="0.9" height="1.2" fill="#212830" opacity="0.75"/><rect x="643.7" y="493.8" width="0.9" height="1.2" fill="#212830" opacity="0.75"/><rect x="603" y="497.1" width="43" height="2.8" fill="#ffffff" opacity="0.95"/><rect x="606" y="497" width="0.9" height="1.2" fill="#212830" opacity="0.75"/><rect x="608.6" y="497.8" width="0.9" height="1.2" fill="#212830" opacity="0.75"/><rect x="612.1" y="498.6" width="0.9" height="1.2" fill="#212830" opacity="0.75"/><rect x="616.5" y="497" width="0.9" height="1.2" fill="#212830" opacity="0.75"/><rect x="621.8" y="497.8" width="0.9" height="1.2" fill="#212830" opacity="0.75"/><rect x="624.4" y="498.6" width="0.9" height="1.2" fill="#212830" opacity="0.75"/><rect x="627.9" y="497" width="0.9" height="1.2" fill="#212830" opacity="0.75"/><rect x="632.3" y="497.8" width="0.9" height="1.2" fill="#212830" opacity="0.75"/><rect x="637.6" y="498.6" width="0.9" height="1.2" fill="#212830" opacity="0.75"/><rect x="640.2" y="497" width="0.9" height="1.2" fill="#212830" opacity="0.75"/><rect x="643.7" y="497.8" width="0.9" height="1.2" fill="#212830" opacity="0.75"/><rect x="603" y="500.3" width="14" height="2.8" fill="#ffffff" opacity="0.95"/><rect x="606" y="500.2" width="0.9" height="1.2" fill="#212830" opacity="0.75"/><rect x="608.6" y="501" width="0.9" height="1.2" fill="#212830" opacity="0.75"/><rect x="612.1" y="501.8" width="0.9" height="1.2" fill="#212830" opacity="0.75"/><path d="M600.4 444L602 442.4L602 445.6Z" fill="#ffffff"/><rect x="702" y="401" width="8" height="3.4" fill="#ffffff"/><path d="M700 407.6L712 407.6" stroke="#00ffff" stroke-width="1.3"/><rect x="701" y="410" width="10.4" height="6" fill="#ffffff"/><rect x="689" y="412.1" width="6" height="1.8" fill="#ffffff" opacity="0.95"/><path d="M696.6 414.6L698 411.6L700 411.6" fill="none" stroke="#ffffff" stroke-width="0.9"/><rect x="713.4" y="412" width="7.6" height="2" fill="#ffffff" opacity="0.95"/><rect x="701" y="417" width="10.4" height="5.4" fill="#ffffff"/><rect x="689" y="418.8" width="6" height="1.8" fill="#ffffff" opacity="0.95"/><path d="M696.6 421.3L698 418.3L700 418.3" fill="none" stroke="#ffffff" stroke-width="0.9"/><rect x="713.4" y="418.7" width="7.6" height="2" fill="#ffffff" opacity="0.95"/><rect x="701" y="424" width="10.4" height="6" fill="#ffffff"/><rect x="689" y="426.1" width="6" height="1.8" fill="#ffffff" opacity="0.95"/><path d="M696.6 428.6L698 425.6L700 425.6" fill="none" stroke="#ffffff" stroke-width="0.9"/><rect x="713.4" y="426" width="8.6" height="2" fill="#ffffff" opacity="0.95"/><rect x="701" y="431" width="10.4" height="5.4" fill="#ffffff"/><rect x="689" y="432.8" width="6" height="1.8" fill="#ffffff" opacity="0.95"/><path d="M696.6 435.3L698 432.3L700 432.3" fill="none" stroke="#ffffff" stroke-width="0.9"/><rect x="713.4" y="432.7" width="8.6" height="2" fill="#ffffff" opacity="0.95"/><rect x="701" y="438" width="10.4" height="5.4" fill="#ffffff"/><rect x="689" y="439.8" width="6" height="1.8" fill="#ffffff" opacity="0.95"/><path d="M696.6 442.3L698 439.3L700 439.3" fill="none" stroke="#ffffff" stroke-width="0.9"/><rect x="713.4" y="439.7" width="13.6" height="2" fill="#ffffff" opacity="0.95"/><rect x="701" y="444.4" width="10.4" height="5.6" fill="#ffffff"/><rect x="689" y="446.3" width="6" height="1.8" fill="#ffffff" opacity="0.95"/><path d="M696.6 448.8L698 445.8L700 445.8" fill="none" stroke="#ffffff" stroke-width="0.9"/><rect x="713.4" y="446.2" width="13.6" height="2" fill="#ffffff" opacity="0.95"/><rect x="701" y="451" width="10.4" height="5.4" fill="#ffffff"/><rect x="689" y="452.8" width="6" height="1.8" fill="#ffffff" opacity="0.95"/><path d="M696.6 455.3L698 452.3L700 452.3" fill="none" stroke="#ffffff" stroke-width="0.9"/><rect x="713.4" y="452.7" width="10.6" height="2" fill="#ffffff" opacity="0.95"/><rect x="701.2" y="457.6" width="10" height="5.4" fill="none" stroke="#ffffff" stroke-width="1.1"/><path d="M703 461.6L709.4 459" stroke="#ffffff" stroke-width="0.9"/><path d="M704 460.3L708.6 460.3" stroke="#ffffff" stroke-width="0.8"/><rect x="713.4" y="459.3" width="12.6" height="2" fill="#ffffff" opacity="0.95"/><rect x="701.2" y="464" width="10" height="5.6" fill="none" stroke="#ffffff" stroke-width="1.1"/><path d="M703 468.2L709.4 465.4" stroke="#ffffff" stroke-width="0.9"/><path d="M704 466.8L708.6 466.8" stroke="#ffffff" stroke-width="0.8"/><rect x="713.4" y="465.8" width="8.6" height="2" fill="#ffffff" opacity="0.95"/><rect x="707" y="471.2" width="12" height="1.7" fill="#ffffff" opacity="0.9"/><path d="M705.6 470.4L705.6 473.6" stroke="#ffffff" stroke-width="0.9"/><rect x="707" y="475.6" width="12" height="1.7" fill="#ffffff" opacity="0.9"/><path d="M705.6 474.8L705.6 478" stroke="#ffffff" stroke-width="0.9"/><rect x="319.5" y="310.5" width="293" height="207" fill="none" stroke="#f00000" stroke-width="1.4"/></g></svg>
<div id="menu" class="abs">
<span style="left:4.8px">默认</span>
<span style="left:49.8px">视图</span>
<span style="left:94.6px">管理</span>
<span style="left:137px">输出</span>
<span style="left:181px">附加模块</span>
<span style="left:249px">A360</span>
<span style="left:299.5px">精选应用</span>
<span style="left:367.5px">Performance</span>
</div>
<div id="tb" class="abs"></div><div id="tbl" class="abs"></div><div id="combo" class="abs"></div>
<svg class="abs" style="left:-5px;top:-4px" width="800" height="70" viewBox="0 0 800 70"><defs><radialGradient id="gsun"><stop offset="0" stop-color="#fff8d8"/><stop offset=".55" stop-color="#ffe38a"/><stop offset="1" stop-color="#e9c860"/></radialGradient><linearGradient id="gtab" x1="0" y1="0" x2="0" y2="1"><stop offset="0" stop-color="#6e6e6e"/><stop offset="1" stop-color="#5a5a5a"/></linearGradient><linearGradient id="gtab2" x1="0" y1="0" x2="0" y2="1"><stop offset="0" stop-color="#5f5f5f"/><stop offset="1" stop-color="#545454"/></linearGradient></defs><path d="M5.6 19 L10.2 19 L7.9 22.6 Z" fill="#e6e6e6"/><path d="M75 20 L80.2 20 L77.6 23.2 Z" fill="#e6e6e6"/><path d="M55.5 27 L59.5 18.5 L67.5 15" stroke="#e8e8e8" stroke-width="1" fill="none"/><rect x="54" y="25.8" width="3" height="3" fill="#1a2a40" stroke="#4aa0ff" stroke-width=".8"/><rect x="59.3" y="17" width="1.6" height="1.6" fill="#4aa0ff"/><rect x="68.4" y="13.6" width="1.4" height="2.4" fill="#4aa0ff"/><path d="M97 13.6 C100 13.6 101.6 15.8 101.6 18.2 C101.6 20.6 99.6 22.2 98.9 24.4 L95.1 24.4 C94.4 22.2 92.4 20.6 92.4 18.2 C92.4 15.8 94 13.6 97 13.6 Z" fill="#ffe596" stroke="#4a4a4a" stroke-width=".7"/><rect x="95.9" y="24.4" width="2.2" height="4" fill="#f4f4f4" stroke="#3f3f3f" stroke-width=".6"/><g stroke="#d8d4c4" stroke-width="1"><path d="M116.5 12.8 V15.4 M116.5 25.6 V28.2 M108.8 20.5 H111.4 M121.6 20.5 H124.2 M111.1 15.1 L112.9 16.9 M120.1 24.1 L121.9 25.9 M121.9 15.1 L120.1 16.9 M112.9 24.1 L111.1 25.9"/></g><circle cx="116.5" cy="20.5" r="3.9" fill="url(#gsun)"/><path d="M135.3 19.6 V17.6 C135.3 14.4 141.3 14.4 141.3 17.6 V18.6" stroke="#ffe9a8" stroke-width="1.3" fill="none"/><rect x="127.8" y="20.2" width="9.4" height="6.8" fill="#ffe08a" stroke="#4a4434" stroke-width=".7"/><rect x="131.9" y="22" width="1.3" height="3.6" fill="#4a4434"/><rect x="148.5" y="15.5" width="13" height="13" fill="#fff" stroke="#0a0a0a" stroke-width="1.2"/><path d="M255 18.6 L263 18.6 L259 23.6 Z" fill="#f2f2f2"/><rect x="270.6" y="13.6" width="12" height="15" fill="#f4f4f4" stroke="#4a4a4a" stroke-width=".8"/><rect x="272.4" y="15.4" width="5.4" height="5.8" fill="#7f9acb" stroke="#1c2f7a" stroke-width="1.1"/><rect x="279.4" y="15.2" width="1.6" height="6" fill="#9a9a9a"/><path d="M274 24.4 H279.6 M275.4 23 L273.6 24.4 L275.4 25.8" stroke="#222" stroke-width=".9" fill="none"/><rect x="292.6" y="17" width="8.4" height="1.5" fill="#f0f0f0"/><path d="M292.6 19.8 L301 19.8 L296.8 24.2 Z" fill="#f0f0f0"/></svg><div class="abs" style="left:11px;top:5.5px;font-family:'Liberation Serif','Noto Serif CJK SC',serif;font-style:italic;font-weight:700;font-size:18.5px;line-height:24px;color:rgba(188,188,188,.5);white-space:nowrap;letter-spacing:-.2px">道桥网</div><div class="abs" style="left:162px;top:10.5px;font-size:12.5px;line-height:14px;color:#fff">0</div>
<div id="tabbar" class="abs"></div><div id="tabstrip" class="abs"></div>
<svg class="abs" style="left:-5px;top:-4px" width="800" height="70" viewBox="0 0 800 70"><path d="M150 58.3 C157.5 58.3 155 36.8 165.5 36.8 L267 36.8 C278 36.8 275.5 58.3 286 58.3 Z" fill="url(#gtab2)"/><path d="M5 62.3 L5 36.2 L141 36.2 C150 36.2 150 46 153 52 C155 56 157 58.3 161 58.3 L161 62.3 Z" fill="url(#gtab)"/><path d="M283.5 41 L298 41 C302.5 41 303.5 46 305.8 50.5 L305.8 54.4 L294.5 54.4 C288.5 54.4 289 46.5 283.5 41 Z" fill="#525252"/><path d="M290.8 47.9 H299 M294.9 43.8 V52" stroke="#dcdcdc" stroke-width="2.2"/><path d="M134.6 44 L140.4 50 M140.4 44 L134.6 50" stroke="#3b3f44" stroke-width="1.7"/><path d="M257.4 44.6 L263.4 50.8 M263.4 44.6 L257.4 50.8" stroke="#34383d" stroke-width="1.7"/><rect x="5" y="61.9" width="4.4" height="1" fill="#f0f0f0"/></svg><div class="abs tabtxt" style="left:3.2px;top:37px;color:#f4f4f4">高寺互通<span style="font-size:13px">30m</span>斜交<span style="font-size:13px">20*</span></div><div class="abs tabtxt" style="left:158.6px;top:37.1px;color:#b2bac6">梁体图纸*</div>
<div class="abs cmd" style="left:248px;top:528.4px;width:98.6px;color:#a8a8a8"><span style="display:inline-block;width:1.5px"></span><i>M</i><i>O</i><i>V</i><i>E</i><i>&nbsp;</i><b>找</b><b>到</b><i>&nbsp;</i><i>1</i><i>&nbsp;</i><b>个</b></div>
<div class="abs cmd" style="left:248px;top:548.4px;width:190.6px;color:#d8d8d8"><span style="display:inline-block;width:1.5px"></span><b>指</b><b>定</b><b>基</b><b>点</b><b>或</b><i>&nbsp;</i><i>[</i><b>位</b><b>移</b><i>(</i><i>D</i><i>)</i><i>]</i><i>&nbsp;</i><i>&lt;</i><b>位</b><b>移</b><i>&gt;</i><i>:</i></div>
<div class="abs cmd" style="left:248px;top:568.3px;width:252.6px;color:#d8d8d8"><span style="display:inline-block;width:1.5px"></span><b>指</b><b>定</b><b>第</b><b>二</b><b>个</b><b>点</b><b>或</b><i>&nbsp;</i><i>&lt;</i><b>使</b><b>用</b><b>第</b><b>一</b><b>个</b><b>点</b><b>作</b><b>为</b><b>位</b><b>移</b><i>&gt;</i><i>:</i></div>
<div id="zfq" class="abs">左幅桥</div>
<div class="abs gt" style="left:350.6px;top:292px;width:26px"><span>70</span></div>
<div class="abs gt" style="left:399.6px;top:292px;width:34px"><span>仆<em>T</em></span></div>
<div id="wm" class="abs"><i style="transform:scaleX(.4)">w</i><i style="transform:scaleX(.4)">w</i><i style="transform:scaleX(.4)">w</i><i style="transform:scaleX(.57)">.</i><i style="transform:scaleX(.57)">c</i><i style="transform:scaleX(.57)">n</i><i style="transform:scaleX(.57)">d</i><i style="transform:scaleX(.57)">a</i><i style="transform:scaleX(.57)">o</i><i style="transform:scaleX(.57)">.</i><i style="transform:scaleX(.57)">c</i><i style="transform:scaleX(.57)">o</i><i style="transform:scaleX(.37)">m</i></div>
<div id="botbar2" class="abs"></div><div id="botbar" class="abs"></div>
<div class="abs" style="left:247.5px;top:591.4px;width:12.5px;height:1.2px;background:#8e9092"></div>
<div class="abs" style="left:284px;top:591.6px;width:1.2px;height:1px;background:#8e9092"></div>
<div class="abs" style="left:314px;top:591.6px;width:1.2px;height:1px;background:#8e9092"></div>
<div class="abs" style="left:327px;top:591.6px;width:1.2px;height:1px;background:#8e9092"></div>
<svg width="0" height="0" style="position:absolute"><defs><linearGradient id="gfold" x1="0" y1="0" x2="1" y2="1"><stop offset="0" stop-color="#ffe9a2"/><stop offset="1" stop-color="#ffcf4a"/></linearGradient></defs></svg>
<div id="win" class="abs">
<span class="h" style="left:27.7px">名称</span><span class="h" style="left:276.6px">修改日期</span><span class="h" style="left:420.4px">类型</span>
<div class="sep" style="left:269.5px"></div><div class="sep" style="left:413.5px"></div>
<svg class="abs" style="left:16.3px;top:29px" width="17" height="14" viewBox="0 0 17 14"><path d="M0 1.2 Q0 0.2 1 0.2 L6.4 0.2 Q7 0.2 7.4 0.8 L8.2 2.3 L15 2.3 Q16 2.3 16 3.3 L16 12 Q16 13 15 13 L1 13 Q0 13 0 12 Z" fill="#efb21a"/><path d="M0 4.6 Q0 3.8 0.9 3.8 L15 3.8 Q16 3.8 16 4.8 L16 11.9 L0 11.9 Z" fill="url(#gfold)"/></svg>
<span class="n" style="top:28.9px"><span class="l">K87+665.5</span>乐至互通主线桥施工图纸</span><span class="d" style="top:28.9px"><span class="l">2025/10/6 11:20</span></span><span class="t" style="top:28.9px">文件夹</span>
<svg class="abs" style="left:16.3px;top:57px" width="17" height="14" viewBox="0 0 17 14"><path d="M0 1.2 Q0 0.2 1 0.2 L6.4 0.2 Q7 0.2 7.4 0.8 L8.2 2.3 L15 2.3 Q16 2.3 16 3.3 L16 12 Q16 13 15 13 L1 13 Q0 13 0 12 Z" fill="#efb21a"/><path d="M0 4.6 Q0 3.8 0.9 3.8 L15 3.8 Q16 3.8 16 4.8 L16 11.9 L0 11.9 Z" fill="url(#gfold)"/></svg>
<span class="n" style="top:56.9px"><span class="l">K104+993.5 </span>和兴互通主线桥</span><span class="d" style="top:56.9px"><span class="l">2025/10/10 17:56</span></span><span class="t" style="top:56.9px">文件夹</span>
<svg class="abs" style="left:16.3px;top:85px" width="17" height="14" viewBox="0 0 17 14"><path d="M0 1.2 Q0 0.2 1 0.2 L6.4 0.2 Q7 0.2 7.4 0.8 L8.2 2.3 L15 2.3 Q16 2.3 16 3.3 L16 12 Q16 13 15 13 L1 13 Q0 13 0 12 Z" fill="#efb21a"/><path d="M0 4.6 Q0 3.8 0.9 3.8 L15 3.8 Q16 3.8 16 4.8 L16 11.9 L0 11.9 Z" fill="url(#gfold)"/></svg>
<span class="n" style="top:84.9px">高寺</span><span class="d" style="top:84.9px"><span class="l">2025/10/6 11:20</span></span><span class="t" style="top:84.9px">文件夹</span>
<svg class="abs" style="left:16.3px;top:113px" width="17" height="14" viewBox="0 0 17 14"><path d="M0 1.2 Q0 0.2 1 0.2 L6.4 0.2 Q7 0.2 7.4 0.8 L8.2 2.3 L15 2.3 Q16 2.3 16 3.3 L16 12 Q16 13 15 13 L1 13 Q0 13 0 12 Z" fill="#efb21a"/><path d="M0 4.6 Q0 3.8 0.9 3.8 L15 3.8 Q16 3.8 16 4.8 L16 11.9 L0 11.9 Z" fill="url(#gfold)"/></svg>
<span class="n" style="top:112.9px">高寺互通主线桥</span><span class="d" style="top:112.9px"><span class="l">2025/10/10 17:56</span></span><span class="t" style="top:112.9px">文件夹</span>
<svg class="abs" style="left:16.3px;top:141px" width="17" height="14" viewBox="0 0 17 14"><path d="M0 1.2 Q0 0.2 1 0.2 L6.4 0.2 Q7 0.2 7.4 0.8 L8.2 2.3 L15 2.3 Q16 2.3 16 3.3 L16 12 Q16 13 15 13 L1 13 Q0 13 0 12 Z" fill="#efb21a"/><path d="M0 4.6 Q0 3.8 0.9 3.8 L15 3.8 Q16 3.8 16 4.8 L16 11.9 L0 11.9 Z" fill="url(#gfold)"/></svg>
<span class="n" style="top:140.9px">新观音大桥<span class="l">(</span>修改<span class="l">)</span></span><span class="d" style="top:140.9px"><span class="l">2025/10/6 11:20</span></span><span class="t" style="top:140.9px">文件夹</span>
</div>
</div></body></html>
